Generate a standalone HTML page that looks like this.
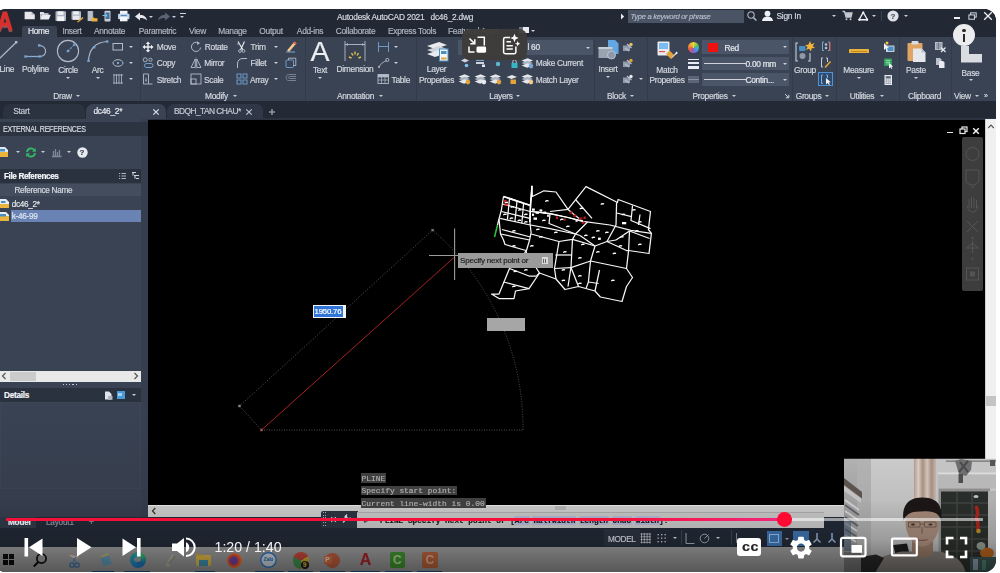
<!DOCTYPE html>
<html><head><meta charset="utf-8"><title>AutoCAD video</title>
<style>
html,body{margin:0;padding:0;background:#fff;}
body{width:1000px;height:573px;overflow:hidden;position:relative;font-family:"Liberation Sans",sans-serif;}
#v{position:absolute;left:-6px;top:8.7px;width:1001.6px;height:563.8px;border-radius:12px;overflow:hidden;background:#000;}
#c,#o{position:absolute;left:6px;top:-8.7px;width:1000px;height:573px;}
#c{filter:blur(0.5px);}
#c div,#c span,#c svg,#o div,#o span,#o svg{position:absolute;}
.t{white-space:nowrap;-webkit-text-stroke:0.18px currentColor;}
svg{overflow:visible;}
</style></head><body>
<div id="v">
<div id="c">
<div style="left:0px;top:0px;width:1000px;height:37.5px;background:#222935;"></div>
<div style="left:0px;top:37px;width:1000px;height:64.5px;background:#3a4353;"></div>
<div style="left:22px;top:26px;width:35px;height:12px;background:#3a4353;border-radius:2px 2px 0 0;"></div>
<span class="t" style="left:-2.6px;top:6px;font-size:26px;line-height:30px;letter-spacing:0px;color:#d9302d;font-weight:bold;transform:scaleX(0.84);transform-origin:0 50%;text-shadow:0 1.5px 1px rgba(240,130,140,0.55);-webkit-text-stroke:0.9px #d9302d;">A</span>
<svg style="left:0px;top:0px;" width="200" height="40" viewBox="0 0 200 40"><path d="M24.600 11.800 H31.500 L34.800 14.800 V19.300 H24.600Z" fill="#e6e8ec"/><path d="M31.500 11.800 V14.800 H34.800Z" fill="#aeb4bf"/><path d="M40 12 H43.500 L44.500 13.200 H48.500 V14.800 H40Z" fill="#dfe2e7"/><path d="M41.800 14.800 H50.800 L48.800 19.500 H40 Z" fill="#e9ebef"/><path d="M40 14 V19.500 L41.800 14.800Z" fill="#c2c7d0"/><rect x="55.500" y="11.300" width="10.500" height="9.800" rx="0.800" fill="#aeb4bf"/><rect x="57.500" y="11.300" width="6" height="3.600" fill="#eef0f3"/><rect x="57.200" y="16.300" width="7" height="4.800" fill="#f4f5f7"/><rect x="71.500" y="11.300" width="9.500" height="8.500" rx="0.800" fill="#b4bac4"/><rect x="73.300" y="11.300" width="5.500" height="3.200" fill="#eef0f3"/><rect x="73" y="15.800" width="6.500" height="4" fill="#e6e8ec"/><path d="M77 21.800 L82.500 17 L83.500 18.200 L78 22.500Z" fill="#e2a43a"/><rect x="87.600" y="11" width="5.600" height="10" fill="#a7adb8"/><path d="M89 11 V21 M91 11 V21" stroke="#dfe2e7" stroke-width="0.700"/><path d="M91.500 17.500 H94 L94.800 18.300 H97.500 V21.500 H91.500Z" fill="#e8b03c"/><rect x="104.500" y="10.800" width="6" height="10.800" rx="1" fill="#c9ced6"/><rect x="105.500" y="12.500" width="4" height="6.500" fill="#3f6f9e"/><path d="M102.500 15.500 H107 M105.500 14 L107.200 15.500 L105.500 17" stroke="#7fc0f0" stroke-width="1" fill="none"/><rect x="120" y="10.800" width="7.500" height="3.500" fill="#f1f3f6"/><rect x="118" y="13.800" width="11.500" height="5.500" rx="1" fill="#b9d3ec"/><rect x="120" y="17" width="7.500" height="4.300" fill="#f4f5f7"/><rect x="120.800" y="15" width="6" height="1" fill="#5b87b5"/></svg>
<svg style="left:134px;top:11px;" width="14" height="11" viewBox="0 0 14 11"><path d="M1 5.5 L6 1.5 V4 C10 4 12.5 6 13 9.5 C11 7.2 9 7 6 7 V9.5 Z" fill="#e6e9ee"/></svg>
<div style="left:148.5px;top:15.5px;width:0;height:0;border-left:2.0px solid transparent;border-right:2.0px solid transparent;border-top:2.0px solid #c9ced7;"></div>
<svg style="left:157px;top:11px;" width="14" height="11" viewBox="0 0 14 11"><path d="M13 5.5 L8 1.5 V4 C4 4 1.5 6 1 9.5 C3 7.2 5 7 8 7 V9.5 Z" fill="#5a6474"/></svg>
<div style="left:172.0px;top:15.5px;width:0;height:0;border-left:2.0px solid transparent;border-right:2.0px solid transparent;border-top:2.0px solid #c9ced7;"></div>
<div style="left:180px;top:13.2px;width:6px;height:1.2px;background:#d3d8df;"></div>
<div style="left:180.4px;top:15.7px;width:0;height:0;border-left:2.6px solid transparent;border-right:2.6px solid transparent;border-top:2.6px solid #c9ced7;"></div>
<span class="t" style="left:337px;top:12px;font-size:8.4px;line-height:10px;letter-spacing:-0.25px;color:#d3d8df;">Autodesk AutoCAD 2021</span>
<span class="t" style="left:430.5px;top:12px;font-size:8.4px;line-height:10px;letter-spacing:-0.25px;color:#d3d8df;">dc46_2.dwg</span>
<svg style="left:620px;top:13px;" width="5" height="7" viewBox="0 0 5 7"><path d="M1 0.5 L4.2 3.5 L1 6.5Z" fill="#e6e9ee"/></svg>
<div style="left:628px;top:10px;width:116px;height:12.5px;background:#4a5465;"></div>
<span class="t" style="left:630.5px;top:12px;font-size:7.6px;line-height:9px;letter-spacing:-0.3px;color:#b4bcc9;font-style:italic;">Type a keyword or phrase</span>
<svg style="left:746px;top:10px;" width="12" height="12" viewBox="0 0 12 12"><circle cx="5" cy="5" r="3.2" fill="none" stroke="#b3bac6" stroke-width="1.05"/><path d="M7.4 7.4 L10.4 10.6" stroke="#b3bac6" stroke-width="1.4"/></svg>
<svg style="left:761px;top:9.5px;" width="13" height="12" viewBox="0 0 13 12"><circle cx="6.5" cy="3.6" r="2.9" fill="#eef0f4"/><path d="M1 11 C1.5 7.5 4 6.6 6.5 6.6 C9 6.6 11.5 7.5 12 11Z" fill="#eef0f4"/></svg>
<span class="t" style="left:776.5px;top:11px;font-size:8.4px;line-height:10px;letter-spacing:-0.25px;color:#d3d8df;">Sign In</span>
<div style="left:832.0px;top:15.0px;width:0;height:0;border-left:2.0px solid transparent;border-right:2.0px solid transparent;border-top:2.0px solid #c9ced7;"></div>
<svg style="left:842px;top:10px;" width="11" height="11" viewBox="0 0 11 11"><path d="M0.5 1.5 H2.5 L4 7 H9 L10 3 H3" fill="none" stroke="#c3c8d0" stroke-width="1.3"/><path d="M3.5 3 H10 L9 7 H4Z" fill="#c3c8d0"/><circle cx="4.5" cy="9.3" r="1" fill="#c3c8d0"/><circle cx="8.5" cy="9.3" r="1" fill="#c3c8d0"/></svg>
<svg style="left:857.5px;top:10.5px;" width="10.5" height="10.5" viewBox="0 0 12 12"><path d="M6 1.5 L10.8 10 H1.2Z" fill="none" stroke="#eef0f4" stroke-width="1.5" stroke-linejoin="round"/><circle cx="6" cy="1.8" r="1.3" fill="#eef0f4"/><circle cx="1.6" cy="10" r="1.3" fill="#eef0f4"/><circle cx="10.4" cy="10" r="1.3" fill="#eef0f4"/></svg>
<div style="left:872.0px;top:15.0px;width:0;height:0;border-left:2.0px solid transparent;border-right:2.0px solid transparent;border-top:2.0px solid #c9ced7;"></div>
<div style="left:881px;top:11px;width:1px;height:10px;background:#3a4252;"></div>
<svg style="left:887px;top:10px;" width="12" height="12" viewBox="0 0 12 12"><circle cx="6" cy="6" r="5.6" fill="#dfe2e7"/></svg>
<span class="t" style="left:893px;top:12px;font-size:8px;line-height:9px;letter-spacing:0px;color:#4b5363;transform:translateX(-50%);font-weight:bold;">?</span>
<div style="left:903.5px;top:15.0px;width:0;height:0;border-left:2.0px solid transparent;border-right:2.0px solid transparent;border-top:2.0px solid #c9ced7;"></div>
<div style="left:953.5px;top:17.2px;width:6px;height:1.6px;background:#eef0f4;"></div>
<svg style="left:967.5px;top:11.5px;" width="9.5" height="8.6" viewBox="0 0 11 10"><rect x="3" y="1" width="6.5" height="5" fill="none" stroke="#cfd4dc" stroke-width="1.2"/><rect x="1" y="3.4" width="6.5" height="5" fill="#222935" stroke="#cfd4dc" stroke-width="1.2"/></svg>
<svg style="left:983px;top:10.5px;" width="10" height="10" viewBox="0 0 10 10"><path d="M1.2 1.2 L8.8 8.8 M8.8 1.2 L1.2 8.8" stroke="#eef0f4" stroke-width="1.3"/></svg>
<span class="t" style="left:38.5px;top:26px;font-size:8.4px;line-height:10px;letter-spacing:-0.3px;color:#e8ebf0;transform:translateX(-50%);">Home</span>
<span class="t" style="left:72px;top:26px;font-size:8.4px;line-height:10px;letter-spacing:-0.3px;color:#b0b6c1;transform:translateX(-50%);">Insert</span>
<span class="t" style="left:109.5px;top:26px;font-size:8.4px;line-height:10px;letter-spacing:-0.3px;color:#b0b6c1;transform:translateX(-50%);">Annotate</span>
<span class="t" style="left:157.5px;top:26px;font-size:8.4px;line-height:10px;letter-spacing:-0.3px;color:#b0b6c1;transform:translateX(-50%);">Parametric</span>
<span class="t" style="left:197.5px;top:26px;font-size:8.4px;line-height:10px;letter-spacing:-0.3px;color:#b0b6c1;transform:translateX(-50%);">View</span>
<span class="t" style="left:232.5px;top:26px;font-size:8.4px;line-height:10px;letter-spacing:-0.3px;color:#b0b6c1;transform:translateX(-50%);">Manage</span>
<span class="t" style="left:271px;top:26px;font-size:8.4px;line-height:10px;letter-spacing:-0.3px;color:#b0b6c1;transform:translateX(-50%);">Output</span>
<span class="t" style="left:310px;top:26px;font-size:8.4px;line-height:10px;letter-spacing:-0.3px;color:#b0b6c1;transform:translateX(-50%);">Add-ins</span>
<span class="t" style="left:355.5px;top:26px;font-size:8.4px;line-height:10px;letter-spacing:-0.3px;color:#b0b6c1;transform:translateX(-50%);">Collaborate</span>
<span class="t" style="left:412px;top:26px;font-size:8.4px;line-height:10px;letter-spacing:-0.3px;color:#b0b6c1;transform:translateX(-50%);">Express Tools</span>
<span class="t" style="left:448px;top:26px;font-size:8.4px;line-height:10px;letter-spacing:-0.3px;color:#b0b6c1;">Featured Apps</span>
<div style="left:518.5px;top:27.3px;width:10px;height:5.5px;background:#e8ebf0;"></div>
<div style="left:518.5px;top:27.3px;width:4px;height:2.3px;background:#6b7383;"></div>
<div style="left:531.0px;top:29.5px;width:0;height:0;border-left:2.0px solid transparent;border-right:2.0px solid transparent;border-top:2.0px solid #c9ced7;"></div>
<div style="left:139.5px;top:38px;width:1.3px;height:63px;background:#333b4a;"></div>
<div style="left:304.5px;top:38px;width:1.3px;height:63px;background:#333b4a;"></div>
<div style="left:416px;top:38px;width:1.3px;height:63px;background:#333b4a;"></div>
<div style="left:594px;top:38px;width:1.3px;height:63px;background:#333b4a;"></div>
<div style="left:646.5px;top:38px;width:1.3px;height:63px;background:#333b4a;"></div>
<div style="left:792px;top:38px;width:1.3px;height:63px;background:#333b4a;"></div>
<div style="left:836px;top:38px;width:1.3px;height:63px;background:#333b4a;"></div>
<div style="left:899px;top:38px;width:1.3px;height:63px;background:#333b4a;"></div>
<div style="left:950.5px;top:38px;width:1.3px;height:63px;background:#333b4a;"></div>
<span class="t" style="left:62.5px;top:91px;font-size:8.4px;line-height:10px;letter-spacing:-0.3px;color:#d3d8df;transform:translateX(-50%);">Draw</span>
<span class="t" style="left:216.5px;top:91px;font-size:8.4px;line-height:10px;letter-spacing:-0.3px;color:#d3d8df;transform:translateX(-50%);">Modify</span>
<span class="t" style="left:355.5px;top:91px;font-size:8.4px;line-height:10px;letter-spacing:-0.3px;color:#d3d8df;transform:translateX(-50%);">Annotation</span>
<span class="t" style="left:501px;top:91px;font-size:8.4px;line-height:10px;letter-spacing:-0.3px;color:#d3d8df;transform:translateX(-50%);">Layers</span>
<span class="t" style="left:616.5px;top:91px;font-size:8.4px;line-height:10px;letter-spacing:-0.3px;color:#d3d8df;transform:translateX(-50%);">Block</span>
<span class="t" style="left:710px;top:91px;font-size:8.4px;line-height:10px;letter-spacing:-0.3px;color:#d3d8df;transform:translateX(-50%);">Properties</span>
<span class="t" style="left:808.5px;top:91px;font-size:8.4px;line-height:10px;letter-spacing:-0.3px;color:#d3d8df;transform:translateX(-50%);">Groups</span>
<span class="t" style="left:862px;top:91px;font-size:8.4px;line-height:10px;letter-spacing:-0.3px;color:#d3d8df;transform:translateX(-50%);">Utilities</span>
<div style="left:76.4px;top:94.95px;width:0;height:0;border-left:2.1px solid transparent;border-right:2.1px solid transparent;border-top:2.1px solid #c9ced7;"></div>
<div style="left:233.4px;top:94.95px;width:0;height:0;border-left:2.1px solid transparent;border-right:2.1px solid transparent;border-top:2.1px solid #c9ced7;"></div>
<div style="left:379.4px;top:94.95px;width:0;height:0;border-left:2.1px solid transparent;border-right:2.1px solid transparent;border-top:2.1px solid #c9ced7;"></div>
<div style="left:515.9px;top:94.95px;width:0;height:0;border-left:2.1px solid transparent;border-right:2.1px solid transparent;border-top:2.1px solid #c9ced7;"></div>
<div style="left:629.9px;top:94.95px;width:0;height:0;border-left:2.1px solid transparent;border-right:2.1px solid transparent;border-top:2.1px solid #c9ced7;"></div>
<div style="left:731.9px;top:94.95px;width:0;height:0;border-left:2.1px solid transparent;border-right:2.1px solid transparent;border-top:2.1px solid #c9ced7;"></div>
<div style="left:825.4px;top:94.95px;width:0;height:0;border-left:2.1px solid transparent;border-right:2.1px solid transparent;border-top:2.1px solid #c9ced7;"></div>
<div style="left:880.4px;top:94.95px;width:0;height:0;border-left:2.1px solid transparent;border-right:2.1px solid transparent;border-top:2.1px solid #c9ced7;"></div>
<span class="t" style="left:924.5px;top:91px;font-size:8.4px;line-height:10px;letter-spacing:-0.3px;color:#d3d8df;transform:translateX(-50%);">Clipboard</span>
<span class="t" style="left:954px;top:91px;font-size:8.4px;line-height:10px;letter-spacing:-0.3px;color:#d3d8df;">View</span>
<div style="left:975.4px;top:94.95px;width:0;height:0;border-left:2.1px solid transparent;border-right:2.1px solid transparent;border-top:2.1px solid #c9ced7;"></div>
<span class="t" style="left:984px;top:92px;font-size:7px;line-height:7px;letter-spacing:0px;color:#d3d8df;">»</span>
<svg style="left:784px;top:93px;" width="6" height="6" viewBox="0 0 6 6"><path d="M1 1 L4.5 4.5 M4.8 1.8 V4.8 H1.8" stroke="#cfd4dc" stroke-width="1" fill="none"/></svg>
<svg style="left:-3px;top:39px;" width="22" height="22" viewBox="0 0 22 22"><path d="M1 21 L19 3.5" stroke="#b3bbc9" stroke-width="1.1"/><rect x="18" y="2" width="2.4" height="2.4" fill="#b3bbc9"/></svg>
<span class="t" style="left:6.8px;top:64px;font-size:8.4px;line-height:10px;letter-spacing:-0.3px;color:#d3d8df;transform:translateX(-50%);">Line</span>
<svg style="left:23px;top:42px;" width="26" height="18" viewBox="0 0 26 18"><path d="M2.5 14.5 H17 C24.5 14.5 24.5 4 16.5 3.5" fill="none" stroke="#b3bbc9" stroke-width="1.1"/><rect x="1.3" y="13.3" width="2.4" height="2.4" fill="#74a3d4"/><rect x="15.5" y="13.3" width="2.4" height="2.4" fill="#74a3d4"/><rect x="15" y="2.2" width="2.4" height="2.4" fill="#74a3d4"/><path d="M4 14.5 H15" stroke="#74a3d4" stroke-width="1.6" stroke-dasharray="2 1"/></svg>
<span class="t" style="left:35.5px;top:64px;font-size:8.4px;line-height:10px;letter-spacing:-0.3px;color:#d3d8df;transform:translateX(-50%);">Polyline</span>
<svg style="left:56px;top:38.5px;" width="24" height="24" viewBox="0 0 24 24"><circle cx="12" cy="12" r="10.6" fill="none" stroke="#b3bbc9" stroke-width="1.1"/><path d="M12 12 L18.5 5.5" stroke="#74a3d4" stroke-width="1.1" stroke-dasharray="2 1.2"/><rect x="10.8" y="10.8" width="2.4" height="2.4" fill="#74a3d4"/><rect x="17.3" y="4.3" width="2.4" height="2.4" fill="#74a3d4"/></svg>
<span class="t" style="left:68px;top:65px;font-size:8.4px;line-height:10px;letter-spacing:-0.3px;color:#d3d8df;transform:translateX(-50%);">Circle</span>
<div style="left:66.0px;top:76.5px;width:0;height:0;border-left:2.0px solid transparent;border-right:2.0px solid transparent;border-top:2.0px solid #c9ced7;"></div>
<svg style="left:86px;top:39px;" width="24" height="24" viewBox="0 0 24 24"><path d="M2.5 22 C3 11 9 3.5 21 2.5" fill="none" stroke="#b3bbc9" stroke-width="1.1"/><rect x="1.3" y="20.6" width="2.4" height="2.4" fill="#74a3d4"/><rect x="7" y="7" width="2.4" height="2.4" fill="#74a3d4"/><rect x="20" y="1.3" width="2.4" height="2.4" fill="#74a3d4"/></svg>
<span class="t" style="left:97.5px;top:65px;font-size:8.4px;line-height:10px;letter-spacing:-0.3px;color:#d3d8df;transform:translateX(-50%);">Arc</span>
<div style="left:95.5px;top:76.5px;width:0;height:0;border-left:2.0px solid transparent;border-right:2.0px solid transparent;border-top:2.0px solid #c9ced7;"></div>
<svg style="left:112px;top:42px;" width="12" height="10" viewBox="0 0 12 10"><rect x="1" y="1.5" width="9.5" height="6.5" fill="none" stroke="#b3bbc9" stroke-width="1"/></svg>
<svg style="left:112px;top:58px;" width="12" height="10" viewBox="0 0 12 10"><ellipse cx="6" cy="5" rx="5" ry="3.3" fill="none" stroke="#b3bbc9" stroke-width="1"/><rect x="5" y="4" width="2" height="2" fill="#74a3d4"/></svg>
<svg style="left:112px;top:73px;" width="12" height="12" viewBox="0 0 12 12"><path d="M2 1 V11 M4.5 1 V11 M7 1 V11 M9.500 1 V11 M1 2 H11 M1 10 H11" stroke="#b3bbc9" stroke-width="0.8"/></svg>
<div style="left:128.5px;top:45.8px;width:0;height:0;border-left:2.0px solid transparent;border-right:2.0px solid transparent;border-top:2.0px solid #c9ced7;"></div>
<div style="left:128.5px;top:62.0px;width:0;height:0;border-left:2.0px solid transparent;border-right:2.0px solid transparent;border-top:2.0px solid #c9ced7;"></div>
<div style="left:128.5px;top:78.0px;width:0;height:0;border-left:2.0px solid transparent;border-right:2.0px solid transparent;border-top:2.0px solid #c9ced7;"></div>
<svg style="left:142px;top:41px;" width="12" height="12" viewBox="0 0 12 12"><path d="M6 0.5 L8.2 3 H6.7 V5.3 H9 V3.800 L11.5 6 L9 8.2 V6.7 H6.7 V9 H8.2 L6 11.5 L3.800 9 H5.3 V6.7 H3 V8.2 L0.5 6 L3 3.800 V5.3 H5.3 V3 H3.800Z" fill="#eef0f4"/></svg>
<span class="t" style="left:156.8px;top:42px;font-size:8.4px;line-height:10px;letter-spacing:-0.3px;color:#d3d8df;">Move</span>
<svg style="left:142px;top:57px;" width="12" height="12" viewBox="0 0 12 12"><circle cx="3.200" cy="2.800" r="2" fill="none" stroke="#b3bbc9" stroke-width="0.9"/><circle cx="8.5" cy="2.800" r="1.6" fill="none" stroke="#b3bbc9" stroke-width="0.9"/><rect x="2.5" y="6.500" width="8.5" height="4" rx="2" fill="none" stroke="#74a3d4" stroke-width="1"/></svg>
<span class="t" style="left:156.8px;top:58px;font-size:8.4px;line-height:10px;letter-spacing:-0.3px;color:#d3d8df;">Copy</span>
<svg style="left:142px;top:73px;" width="12" height="12" viewBox="0 0 12 12"><path d="M1.5 1 H6.500 V11 H1.5Z M6.500 11 H10.5" fill="none" stroke="#b3bbc9" stroke-width="0.9"/><path d="M4 3.5 L4.800 8.5 H3.200Z" fill="#b3bbc9"/></svg>
<span class="t" style="left:156.8px;top:75px;font-size:8.4px;line-height:10px;letter-spacing:-0.3px;color:#d3d8df;">Stretch</span>
<svg style="left:190px;top:41px;" width="12" height="12" viewBox="0 0 12 12"><path d="M8.5 2 A4.6 4.6 0 1 0 10.6 6.500" fill="none" stroke="#b3bbc9" stroke-width="1"/><path d="M7 0.3 L10 2.300 L7.2 3.900Z" fill="#b3bbc9"/></svg>
<span class="t" style="left:204.8px;top:42px;font-size:8.4px;line-height:10px;letter-spacing:-0.3px;color:#d3d8df;">Rotate</span>
<svg style="left:190px;top:57px;" width="12" height="12" viewBox="0 0 12 12"><path d="M5.3 2 L1 10.5 H5.3Z M6.800 2 L11 10.5 H6.800Z" fill="none" stroke="#b3bbc9" stroke-width="0.9"/><path d="M6 0.5 V11.500" stroke="#b3bbc9" stroke-width="0.6" stroke-dasharray="1 1"/></svg>
<span class="t" style="left:204.3px;top:58px;font-size:8.4px;line-height:10px;letter-spacing:-0.3px;color:#d3d8df;">Mirror</span>
<svg style="left:190px;top:73px;" width="12" height="12" viewBox="0 0 12 12"><rect x="1" y="1" width="10" height="10" fill="none" stroke="#b3bbc9" stroke-width="0.9"/><rect x="1" y="6" width="5" height="5" fill="none" stroke="#b3bbc9" stroke-width="0.9"/></svg>
<span class="t" style="left:204px;top:75px;font-size:8.4px;line-height:10px;letter-spacing:-0.3px;color:#d3d8df;">Scale</span>
<svg style="left:236px;top:41px;" width="12" height="12" viewBox="0 0 12 12"><path d="M2 0.5 L7 9 M8.5 0.5 L4.500 9" stroke="#eef0f4" stroke-width="1.1"/><circle cx="4" cy="10" r="1.4" fill="none" stroke="#b3bbc9" stroke-width="0.9"/><circle cx="7.500" cy="10" r="1.4" fill="none" stroke="#b3bbc9" stroke-width="0.9"/><path d="M1 3 H4" stroke="#b3bbc9" stroke-width="0.9"/></svg>
<span class="t" style="left:250.5px;top:42px;font-size:8.4px;line-height:10px;letter-spacing:-0.3px;color:#d3d8df;">Trim</span>
<svg style="left:236px;top:57px;" width="12" height="12" viewBox="0 0 12 12"><path d="M1.5 11 V7 C1.500 3.500 3.500 1.500 7 1.5 H11" fill="none" stroke="#b3bbc9" stroke-width="1"/></svg>
<span class="t" style="left:250.5px;top:58px;font-size:8.4px;line-height:10px;letter-spacing:-0.3px;color:#d3d8df;">Fillet</span>
<svg style="left:236px;top:73px;" width="12" height="12" viewBox="0 0 12 12"><rect x="1" y="1" width="4" height="4" fill="none" stroke="#74a3d4" stroke-width="0.9"/><rect x="7" y="1" width="4" height="4" fill="none" stroke="#74a3d4" stroke-width="0.9"/><rect x="1" y="7" width="4" height="4" fill="none" stroke="#74a3d4" stroke-width="0.9"/><rect x="7" y="7" width="4" height="4" fill="none" stroke="#74a3d4" stroke-width="0.9"/></svg>
<span class="t" style="left:250px;top:75px;font-size:8.4px;line-height:10px;letter-spacing:-0.3px;color:#d3d8df;">Array</span>
<div style="left:274.0px;top:45.8px;width:0;height:0;border-left:2.0px solid transparent;border-right:2.0px solid transparent;border-top:2.0px solid #c9ced7;"></div>
<div style="left:274.0px;top:62.0px;width:0;height:0;border-left:2.0px solid transparent;border-right:2.0px solid transparent;border-top:2.0px solid #c9ced7;"></div>
<div style="left:274.0px;top:78.0px;width:0;height:0;border-left:2.0px solid transparent;border-right:2.0px solid transparent;border-top:2.0px solid #c9ced7;"></div>
<svg style="left:285px;top:40px;" width="13" height="13" viewBox="0 0 13 13"><path d="M2 10.500 L9.500 1.5 L11.500 3.200 L4 12Z" fill="#f2c98c"/><path d="M9.500 1.5 L11.500 3.200 L10.3 4.600 L8.300 2.900Z" fill="#e2574c"/><path d="M1 12 H10" stroke="#7aa6d6" stroke-width="1"/></svg>
<svg style="left:285px;top:57px;" width="12" height="12" viewBox="0 0 12 12"><rect x="1" y="3" width="7.500" height="7.500" rx="1" fill="none" stroke="#74a3d4" stroke-width="0.9"/><path d="M3.500 3 V1.200 H10.800 V8.500 H8.500" fill="none" stroke="#b3bbc9" stroke-width="0.9"/></svg>
<svg style="left:285px;top:73px;" width="12" height="12" viewBox="0 0 12 12"><path d="M11 1.5 H3.500 C0.5 1.5 0.5 7.500 3.500 7.500 H11 M11 3.500 H4.500 C3 3.500 3 5.500 4.500 5.500 H11" fill="none" stroke="#7f8897" stroke-width="0.9"/></svg>
<span class="t" style="left:320px;top:35px;font-size:28.5px;line-height:32px;letter-spacing:0px;color:#eceef2;transform:translateX(-50%);">A</span>
<span class="t" style="left:320px;top:65px;font-size:8.4px;line-height:10px;letter-spacing:-0.3px;color:#d3d8df;transform:translateX(-50%);">Text</span>
<div style="left:318.0px;top:76.5px;width:0;height:0;border-left:2.0px solid transparent;border-right:2.0px solid transparent;border-top:2.0px solid #c9ced7;"></div>
<svg style="left:343px;top:40px;" width="24" height="22" viewBox="0 0 24 22"><path d="M2 1 V21 M22 1 V21 M2 4.500 H22" stroke="#b3bbc9" stroke-width="0.9" fill="none"/><path d="M2 4.500 L5 3.300 V5.700Z M22 4.500 L19 3.300 V5.700Z" fill="#b3bbc9"/><path d="M8.500 13 L10 15.500 M12 11.500 V14.500 M15.500 13 L14 15.500 M6 17 L8.500 18 M18 17 L15.500 18" stroke="#e8c14a" stroke-width="1.4"/></svg>
<span class="t" style="left:355px;top:64px;font-size:8.4px;line-height:10px;letter-spacing:-0.3px;color:#d3d8df;transform:translateX(-50%);">Dimension</span>
<svg style="left:377px;top:41px;" width="13" height="12" viewBox="0 0 13 12"><path d="M1.500 1 V11 M11.500 1 V11 M1.500 5.500 H11.500" stroke="#74a3d4" stroke-width="0.9"/></svg>
<svg style="left:377px;top:57px;" width="13" height="12" viewBox="0 0 13 12"><path d="M2 10 C4 6 6 5.500 9.500 3.500" fill="none" stroke="#b3bbc9" stroke-width="0.9"/><circle cx="10.300" cy="3" r="1.600" fill="none" stroke="#b3bbc9" stroke-width="0.9"/><circle cx="2" cy="10" r="1" fill="#b3bbc9"/></svg>
<svg style="left:377px;top:73px;" width="13" height="12" viewBox="0 0 13 12"><rect x="1" y="1.500" width="10.500" height="9" fill="none" stroke="#b3bbc9" stroke-width="0.9"/><path d="M1 4 H11.500 M4.500 4 V10.500 M8 4 V10.500 M1 7 H11.500" stroke="#b3bbc9" stroke-width="0.7"/><rect x="1" y="1.500" width="10.500" height="2.500" fill="#b3bbc9"/></svg>
<span class="t" style="left:391.5px;top:75px;font-size:8.4px;line-height:10px;letter-spacing:-0.3px;color:#d3d8df;">Table</span>
<div style="left:393.5px;top:45.8px;width:0;height:0;border-left:2.0px solid transparent;border-right:2.0px solid transparent;border-top:2.0px solid #c9ced7;"></div>
<div style="left:393.5px;top:62.0px;width:0;height:0;border-left:2.0px solid transparent;border-right:2.0px solid transparent;border-top:2.0px solid #c9ced7;"></div>
<svg style="left:424px;top:39px;" width="26" height="24" viewBox="0 0 26 24"><path d="M3 7 L15 3 L23 6 L11 10Z" fill="#e9ebef"/><path d="M3 11 L15 7 L23 10 L11 14Z" fill="#cfd3da"/><path d="M3 15 L15 11 L23 14 L11 18Z" fill="#e9ebef"/><rect x="15.500" y="10" width="8.500" height="12" fill="#f4f5f7" stroke="#4a8fc4" stroke-width="1"/><rect x="17" y="12" width="5.500" height="3" fill="#4a8fc4"/><rect x="17" y="18.500" width="5.500" height="2" fill="#e2a43a"/></svg>
<span class="t" style="left:436.5px;top:64px;font-size:8.4px;line-height:10px;letter-spacing:-0.3px;color:#d3d8df;transform:translateX(-50%);">Layer</span>
<span class="t" style="left:436.5px;top:75px;font-size:8.4px;line-height:10px;letter-spacing:-0.3px;color:#d3d8df;transform:translateX(-50%);">Properties</span>
<div style="left:458px;top:40px;width:134.5px;height:14.5px;background:#4b5568;"></div>
<span class="t" style="left:527.5px;top:42px;font-size:8.4px;line-height:10px;letter-spacing:-0.3px;color:#e0e4ea;">l 60</span>
<div style="left:586px;top:46.5px;width:0;height:0;border-left:2px solid transparent;border-right:2px solid transparent;border-top:2px solid #c9ced7;"></div>
<svg style="left:460px;top:57px;" width="10" height="12" viewBox="0 0 10 12"><path d="M1 3.500 L5 1.500 L9 3.500 L5 5.500Z" fill="#cfd4dc"/><circle cx="6.500" cy="8.500" r="1.800" fill="#7fc4e8"/></svg>
<svg style="left:475px;top:57px;" width="12" height="12" viewBox="0 0 12 12"><rect x="1" y="2" width="8" height="2" fill="#7aa6d6"/><rect x="1" y="5" width="8" height="2" fill="#cfd4dc"/><rect x="7" y="7.500" width="3" height="2.500" fill="#e4e7ec"/></svg>
<svg style="left:494px;top:60px;" width="8" height="8" viewBox="0 0 8 8"><circle cx="4" cy="4" r="2.200" fill="#5fb8c9"/></svg>
<svg style="left:510px;top:59px;" width="9" height="10" viewBox="0 0 9 10"><rect x="1.500" y="4" width="6" height="5" fill="#36b5c4"/><path d="M2.800 4 V2.500 A1.700 1.700 0 0 1 6.200 2.500 V4" fill="none" stroke="#cfd4dc" stroke-width="0.9"/></svg>
<svg style="left:520.5px;top:57px;" width="13.2" height="12" viewBox="0 0 11 10"><path d="M0.500 3 L5.500 1 L10 3 L5 5Z" fill="#e4e7ec"/><path d="M0.500 5 L5.500 3.200 L10 5 L5 7Z" fill="#aab2bf"/><path d="M0.500 7 L5.500 5.200 L10 7 L5 9Z" fill="#e4e7ec"/><circle cx="8.300" cy="7.600" r="1.900" fill="#7aa6d6"/></svg>
<span class="t" style="left:535.8px;top:58px;font-size:8.4px;line-height:10px;letter-spacing:-0.3px;color:#d3d8df;">Make Current</span>
<svg style="left:458px;top:73px;" width="13.2" height="12" viewBox="0 0 11 10"><path d="M0.500 3 L5.500 1 L10 3 L5 5Z" fill="#e4e7ec"/><path d="M0.500 5 L5.500 3.200 L10 5 L5 7Z" fill="#aab2bf"/><path d="M0.500 7 L5.500 5.200 L10 7 L5 9Z" fill="#e4e7ec"/><circle cx="8.300" cy="7.600" r="1.900" fill="#e2a43a"/></svg>
<svg style="left:473.5px;top:73px;" width="13.2" height="12" viewBox="0 0 11 10"><path d="M0.500 3 L5.500 1 L10 3 L5 5Z" fill="#e4e7ec"/><path d="M0.500 5 L5.500 3.200 L10 5 L5 7Z" fill="#aab2bf"/><path d="M0.500 7 L5.500 5.200 L10 7 L5 9Z" fill="#e4e7ec"/><circle cx="8.300" cy="7.600" r="1.900" fill="#e8eaee"/></svg>
<svg style="left:489px;top:73px;" width="13.2" height="12" viewBox="0 0 11 10"><path d="M0.500 3 L5.500 1 L10 3 L5 5Z" fill="#e4e7ec"/><path d="M0.500 5 L5.500 3.200 L10 5 L5 7Z" fill="#aab2bf"/><path d="M0.500 7 L5.500 5.200 L10 7 L5 9Z" fill="#e4e7ec"/><circle cx="8.300" cy="7.600" r="1.900" fill="#e2a43a"/></svg>
<svg style="left:506px;top:74px;" width="12" height="11" viewBox="0 0 12 11"><path d="M0.500 3 L6 1 L11 3 L5.500 5Z" fill="#e4e7ec"/><rect x="4.500" y="5.500" width="5.500" height="4.500" fill="#e2a43a"/></svg>
<svg style="left:520.5px;top:73px;" width="13.2" height="12" viewBox="0 0 11 10"><path d="M0.500 3 L5.500 1 L10 3 L5 5Z" fill="#e4e7ec"/><path d="M0.500 5 L5.500 3.200 L10 5 L5 7Z" fill="#aab2bf"/><path d="M0.500 7 L5.500 5.200 L10 7 L5 9Z" fill="#e4e7ec"/><circle cx="8.300" cy="7.600" r="1.900" fill="#f2c98c"/></svg>
<span class="t" style="left:535.8px;top:75px;font-size:8.4px;line-height:10px;letter-spacing:-0.3px;color:#d3d8df;">Match Layer</span>
<svg style="left:597px;top:39px;" width="23" height="22" viewBox="0 0 23 22"><path d="M11 1 H18 L21.500 4.500 V15 H11Z" fill="#62a7e3"/><rect x="1.500" y="8" width="14" height="11" fill="#9aa3b2"/><rect x="1.500" y="8" width="14" height="2" fill="#c9ced6"/><circle cx="14.500" cy="16" r="4" fill="#8f98a7" stroke="#c9ced6" stroke-width="0.8"/></svg>
<span class="t" style="left:608px;top:64px;font-size:8.4px;line-height:10px;letter-spacing:-0.3px;color:#d3d8df;transform:translateX(-50%);">Insert</span>
<div style="left:606.0px;top:76.0px;width:0;height:0;border-left:2.0px solid transparent;border-right:2.0px solid transparent;border-top:2.0px solid #c9ced7;"></div>
<svg style="left:622px;top:42px;" width="12" height="11" viewBox="0 0 12 11"><rect x="1" y="3.500" width="7" height="5.500" fill="#8f9aab"/><path d="M5 2 L9.500 6 M3 6 L7 9" stroke="#b9c0cb" stroke-width="1.2"/><circle cx="9" cy="2.500" r="1.700" fill="#e2c06a"/></svg>
<svg style="left:622px;top:58px;" width="12" height="11" viewBox="0 0 12 11"><rect x="1" y="3.500" width="7" height="5.500" fill="#8f9aab"/><path d="M5 2 L9.500 6 M3 6 L7 9" stroke="#b9c0cb" stroke-width="1.2"/><circle cx="9" cy="2.500" r="1.700" fill="#e2a43a"/></svg>
<svg style="left:622px;top:73.5px;" width="12" height="11" viewBox="0 0 12 11"><rect x="1" y="3.500" width="7" height="5.500" fill="#8f9aab"/><path d="M5 2 L9.500 6 M3 6 L7 9" stroke="#b9c0cb" stroke-width="1.2"/><circle cx="9" cy="2.500" r="1.700" fill="#e8eaee"/></svg>
<div style="left:638.5px;top:78.0px;width:0;height:0;border-left:2.0px solid transparent;border-right:2.0px solid transparent;border-top:2.0px solid #c9ced7;"></div>
<svg style="left:656px;top:40px;" width="24" height="24" viewBox="0 0 24 24"><rect x="1.500" y="1.500" width="12" height="14" rx="1" fill="#e8ebf0"/><rect x="3" y="3" width="9" height="6" fill="#7bbcf0"/><rect x="3" y="11" width="6" height="1.200" fill="#e2574c"/><path d="M10 14 L15 19 L18.500 15.500 L13.500 10.500Z" fill="#e2a43a"/><path d="M15 19 L18.500 15.500 L22 13 L20.500 11.500Z" fill="#f1f3f6"/></svg>
<span class="t" style="left:667px;top:65px;font-size:8.4px;line-height:10px;letter-spacing:-0.3px;color:#d3d8df;transform:translateX(-50%);">Match</span>
<span class="t" style="left:667px;top:75px;font-size:8.4px;line-height:10px;letter-spacing:-0.3px;color:#d3d8df;transform:translateX(-50%);">Properties</span>
<div style="left:687.500px;top:42px;width:11px;height:11px;border-radius:50%;background:conic-gradient(#f2d33c,#59c356,#3aa0e8,#8a5fd6,#e8534a,#f09a3a,#f2d33c);"></div>
<div style="left:688px;top:58.5px;width:10.5px;height:1.8px;background:#e8ebf0;"></div>
<div style="left:688px;top:62px;width:10.5px;height:2.2px;background:#e8ebf0;"></div>
<div style="left:688px;top:66px;width:10.5px;height:2.6px;background:#e8ebf0;"></div>
<div style="left:688px;top:75.5px;width:10.5px;height:7px;background:#5b6576;"></div>
<div style="left:688px;top:78.5px;width:10.5px;height:1px;background:#8a93a3;"></div>
<div style="left:701.5px;top:40px;width:87.5px;height:13.8px;background:#4b5568;"></div>
<div style="left:701.5px;top:56.5px;width:87.5px;height:13.8px;background:#4b5568;"></div>
<div style="left:701.5px;top:72.5px;width:87.5px;height:13.8px;background:#4b5568;"></div>
<div style="left:707.5px;top:42.5px;width:10.5px;height:9.5px;background:#f01010;"></div>
<span class="t" style="left:724.5px;top:43px;font-size:8.4px;line-height:10px;letter-spacing:-0.3px;color:#e6e9ee;">Red</span>
<div style="left:704px;top:63px;width:42px;height:1px;background:#cfd4dc;"></div>
<span class="t" style="left:745.5px;top:59px;font-size:8.4px;line-height:10px;letter-spacing:-0.3px;color:#e6e9ee;">0.00 mm</span>
<div style="left:704px;top:79px;width:42px;height:1px;background:#cfd4dc;"></div>
<span class="t" style="left:745.5px;top:75px;font-size:8.4px;line-height:10px;letter-spacing:-0.3px;color:#e6e9ee;">Contin...</span>
<div style="left:782.5px;top:46.0px;width:0;height:0;border-left:2px solid transparent;border-right:2px solid transparent;border-top:2px solid #c9ced7;"></div>
<div style="left:782.5px;top:62.5px;width:0;height:0;border-left:2px solid transparent;border-right:2px solid transparent;border-top:2px solid #c9ced7;"></div>
<div style="left:782.5px;top:78.5px;width:0;height:0;border-left:2px solid transparent;border-right:2px solid transparent;border-top:2px solid #c9ced7;"></div>
<svg style="left:795px;top:41px;" width="20" height="22" viewBox="0 0 20 22"><path d="M3 2 H1 V20 H3 M13 20 H15 V12" fill="none" stroke="#c7ced9" stroke-width="1.100"/><rect x="4" y="5" width="6.500" height="5" rx="1" fill="#4a8fc4"/><circle cx="7.500" cy="15" r="3" fill="#8f98a7"/><path d="M15 0 L16.200 3.300 L19.500 2 L17.700 5 L20 7 L16.700 7.200 L16 10.500 L14 7.800 L11 9 L12.500 6 L10 4 L13.300 3.800Z" fill="#f2b53a"/></svg>
<span class="t" style="left:805px;top:65px;font-size:8.4px;line-height:10px;letter-spacing:-0.3px;color:#d3d8df;transform:translateX(-50%);">Group</span>
<svg style="left:821px;top:41px;" width="11" height="11" viewBox="0 0 11 11"><path d="M3 1 H1.500 V9.500 H3 M7 1 H8.500 V9.500 H7" fill="none" stroke="#7aa6d6" stroke-width="1"/><path d="M9 1 V10" stroke="#e2574c" stroke-width="1"/><circle cx="5" cy="3.500" r="1.300" fill="#b9c0cb"/><circle cx="5" cy="7" r="1.300" fill="#b9c0cb"/></svg>
<svg style="left:820px;top:57px;" width="12" height="12" viewBox="0 0 12 12"><path d="M3 1 H1.500 V10 H3 M6 1 H7.500 V5" fill="none" stroke="#c7ced9" stroke-width="1"/><path d="M5 10.500 L10.500 4.500" stroke="#e2a43a" stroke-width="1.600"/></svg>
<div style="left:818px;top:72px;width:15px;height:14px;background:#2f4a6b;box-shadow:inset 0 0 0 1px #4f93d6;"></div>
<svg style="left:820px;top:74px;" width="12" height="11" viewBox="0 0 12 11"><path d="M3 1 H1.500 V9.500 H3 M6 1 H7.500 V4" fill="none" stroke="#7fb0e0" stroke-width="1"/><path d="M6 4 V10.500 L7.700 9 L9 11 L9.900 10.500 L8.700 8.500 L10.800 8.300Z" fill="#f4f5f7"/></svg>
<div style="left:849px;top:48.5px;width:19.5px;height:4.6px;background:#e9b33c;border-radius:0.5px;"></div>
<div style="left:850.5px;top:50.5px;width:16.5px;height:0.9px;background:#c28a1c;"></div>
<span class="t" style="left:858.5px;top:65px;font-size:8.4px;line-height:10px;letter-spacing:-0.3px;color:#d3d8df;transform:translateX(-50%);">Measure</span>
<div style="left:856.5px;top:76.5px;width:0;height:0;border-left:2.0px solid transparent;border-right:2.0px solid transparent;border-top:2.0px solid #c9ced7;"></div>
<svg style="left:882px;top:41px;" width="13" height="12" viewBox="0 0 13 12"><rect x="4.500" y="5" width="7.500" height="5.500" fill="#4a8fc4" stroke="#e8ebf0" stroke-width="0.8"/><path d="M2 2 V9 L3.800 7.500 L5 10 L6 9.500 L4.800 7.200 L7 7Z" fill="#f4f5f7"/><circle cx="5" cy="2" r="1.500" fill="#f2c53a"/></svg>
<svg style="left:882px;top:57px;" width="13" height="12" viewBox="0 0 13 12"><rect x="2" y="1.500" width="8" height="7.500" fill="#2f9e5b"/><path d="M3.500 3.500 H8.500 M3.500 5.500 H8.500 M5 2.500 V8 M7 2.500 V8" stroke="#9fe0b8" stroke-width="0.600"/><path d="M7 6 V11.500 L8.500 10.300 L9.500 12 L10.300 11.500 L9.400 9.800 L11.200 9.600Z" fill="#f4f5f7"/></svg>
<svg style="left:883px;top:73.5px;" width="11" height="12" viewBox="0 0 11 12"><rect x="1.500" y="1" width="7.500" height="10" fill="#e8ebf0"/><rect x="2.700" y="2.200" width="5.100" height="2.300" fill="#5b6576"/><path d="M2.700 6 H7.800 M2.700 7.800 H7.800 M2.700 9.500 H7.800" stroke="#5b6576" stroke-width="0.900" stroke-dasharray="1.100 0.800"/></svg>
<svg style="left:906px;top:40px;" width="22" height="23" viewBox="0 0 22 23"><rect x="1.500" y="3" width="15" height="18" rx="1" fill="#e0a562"/><rect x="5.500" y="1" width="7" height="3.500" rx="1" fill="#d8dce3"/><path d="M7 8.500 H15.500 L19.500 12.500 V22 H7Z" fill="#e4e7ec"/><path d="M15.500 8.500 V12.500 H19.500Z" fill="#b9c0cb"/></svg>
<span class="t" style="left:916px;top:65px;font-size:8.4px;line-height:10px;letter-spacing:-0.3px;color:#d3d8df;transform:translateX(-50%);">Paste</span>
<div style="left:914.0px;top:77.0px;width:0;height:0;border-left:2.0px solid transparent;border-right:2.0px solid transparent;border-top:2.0px solid #c9ced7;"></div>
<svg style="left:934px;top:41px;" width="13" height="12" viewBox="0 0 13 12"><rect x="1" y="1" width="7.500" height="8" fill="#b9c0cb"/><path d="M2 3 H7.500 M2 5 H7.500 M2 7 H7.500 M4.500 1.500 V8.500" stroke="#5b6576" stroke-width="0.700"/><path d="M7 6.500 L11.500 11 M11.500 6.500 L7 11" stroke="#e8ebf0" stroke-width="1.200"/></svg>
<svg style="left:935px;top:57px;" width="11" height="12" viewBox="0 0 11 12"><path d="M1 1 H5 L6.500 2.500 V8 H1Z" fill="#b9c0cb"/><path d="M4 4 H8 L9.500 5.500 V11 H4Z" fill="#e8ebf0"/></svg>
<svg style="left:960px;top:46px;" width="23" height="17" viewBox="0 0 23 17"><path d="M1 0 H9 V8 H22 V16.500 H1Z" fill="#d9dce1"/></svg>
<span class="t" style="left:970.5px;top:68px;font-size:8.4px;line-height:10px;letter-spacing:-0.3px;color:#d3d8df;transform:translateX(-50%);">Base</span>
<div style="left:968.5px;top:79.0px;width:0;height:0;border-left:2.0px solid transparent;border-right:2.0px solid transparent;border-top:2.0px solid #c9ced7;"></div>
<div style="left:0px;top:100.5px;width:1000px;height:20px;background:#232a36;"></div>
<div style="left:0px;top:118px;width:1000px;height:2.2px;background:#2b3340;"></div>
<div style="left:3px;top:103.5px;width:82px;height:15.5px;background:#2b3341;border-radius:7px 7px 0 0;"></div>
<span class="t" style="left:13.3px;top:106px;font-size:8.4px;line-height:10px;letter-spacing:-0.3px;color:#c5cad3;">Start</span>
<div style="left:86px;top:103.5px;width:80px;height:15.5px;background:#3a4353;border-radius:7px 7px 0 0;"></div>
<span class="t" style="left:93.5px;top:106px;font-size:8.4px;line-height:10px;letter-spacing:-0.3px;color:#e8ebf0;">dc46_2*</span>
<svg style="left:152px;top:108px;" width="8" height="8" viewBox="0 0 8 8"><path d="M1.300 1.300 L6.700 6.700 M6.700 1.300 L1.300 6.700" stroke="#dfe3ea" stroke-width="1.150"/></svg>
<div style="left:167px;top:103.5px;width:96px;height:15.5px;background:#303746;border-radius:7px 7px 0 0;"></div>
<span class="t" style="left:174px;top:106px;font-size:8.4px;line-height:10px;letter-spacing:-0.55px;color:#c5cad3;">BDQH_TAN CHAU*</span>
<svg style="left:244.5px;top:108px;" width="8" height="8" viewBox="0 0 8 8"><path d="M1.300 1.300 L6.700 6.700 M6.700 1.300 L1.300 6.700" stroke="#c3c8d1" stroke-width="1.150"/></svg>
<svg style="left:267.5px;top:108px;" width="8" height="8" viewBox="0 0 8 8"><path d="M4 1 V7 M1 4 H7" stroke="#8d95a3" stroke-width="1.500"/></svg>
<div style="left:0px;top:119px;width:148px;height:397.5px;background:#3a4353;"></div>
<div style="left:141px;top:119px;width:7px;height:397.5px;background:#363e4d;"></div>
<div style="left:0px;top:121.5px;width:148px;height:14.5px;background:#2c3441;"></div>
<span class="t" style="left:2.8px;top:124px;font-size:8.4px;line-height:10px;letter-spacing:-0.3px;color:#d9dde4;transform:scaleX(0.845);transform-origin:0 50%;">EXTERNAL REFERENCES</span>
<svg style="left:-2px;top:146px;" width="11" height="12" viewBox="0 0 11 12"><path d="M1 1 H7 L10 4 V11 H1Z" fill="#dfe6f0"/><path d="M1 6 H10 V11 H1Z" fill="#e9b33c"/><rect x="2" y="3" width="5" height="2.500" fill="#4a8fc4"/></svg>
<div style="left:15.5px;top:151.3px;width:0;height:0;border-left:2.0px solid transparent;border-right:2.0px solid transparent;border-top:2.0px solid #c9ced7;"></div>
<svg style="left:24.5px;top:146.5px;" width="12" height="11" viewBox="0 0 12 11"><path d="M2 5 A4 4 0 0 1 9.500 3.500 M10 6 A4 4 0 0 1 2.500 7.500" fill="none" stroke="#35b565" stroke-width="1.900"/><path d="M10.800 1 V4.800 H7Z M1.200 10 V6.200 H5Z" fill="#35b565"/></svg>
<div style="left:41.0px;top:151.3px;width:0;height:0;border-left:2.0px solid transparent;border-right:2.0px solid transparent;border-top:2.0px solid #c9ced7;"></div>
<svg style="left:50.5px;top:147px;" width="11" height="10" viewBox="0 0 11 10"><path d="M1 9.500 H10.500 M2.500 9 V4 M4.500 9 V2 M6.500 9 V5 M8.500 9 V3" stroke="#7f8897" stroke-width="1.300"/></svg>
<div style="left:66.5px;top:151.3px;width:0;height:0;border-left:2.0px solid transparent;border-right:2.0px solid transparent;border-top:2.0px solid #c9ced7;"></div>
<svg style="left:76.5px;top:146.5px;" width="11" height="11" viewBox="0 0 11 11"><circle cx="5.500" cy="5.500" r="5.200" fill="#e8ebf0"/></svg>
<span class="t" style="left:82px;top:148px;font-size:8px;line-height:9px;letter-spacing:0px;color:#3a4353;transform:translateX(-50%);font-weight:bold;">?</span>
<div style="left:0px;top:168.5px;width:141px;height:14px;background:#2a323f;"></div>
<span class="t" style="left:4px;top:172px;font-size:8.2px;line-height:9px;letter-spacing:-0.4px;color:#f4f6f9;font-weight:bold;">File References</span>
<svg style="left:118px;top:171.5px;" width="9" height="8" viewBox="0 0 9 8"><path d="M1 1.500 H2.200 M3.500 1.500 H8 M1 4 H2.200 M3.500 4 H8 M1 6.500 H2.200 M3.500 6.500 H8" stroke="#aeb5c1" stroke-width="1"/></svg>
<svg style="left:130.5px;top:171px;" width="9" height="9" viewBox="0 0 9 9"><path d="M1 1.500 H5 M3 4.500 H8 M5 7.500 H8 M2 1.500 V4.500 M4 4.500 V7.500" stroke="#cfd4dc" stroke-width="1.100"/></svg>
<div style="left:0px;top:183.5px;width:141px;height:12.5px;background:#444d5e;"></div>
<span class="t" style="left:14.5px;top:186px;font-size:8.2px;line-height:9px;letter-spacing:-0.3px;color:#d8dce3;">Reference Name</span>
<svg style="left:-1.5px;top:197.5px;" width="11" height="11" viewBox="0 0 11 11"><path d="M1 1 H7 L10 4 V10 H1Z" fill="#e8edf4"/><path d="M1 6 H10 V10 H1Z" fill="#e9b33c"/><rect x="2" y="3" width="4.500" height="2" fill="#4a8fc4"/></svg>
<span class="t" style="left:11.8px;top:200px;font-size:8.2px;line-height:9px;letter-spacing:-0.3px;color:#e1e5ea;">dc46_2*</span>
<div style="left:10.5px;top:209.5px;width:130.5px;height:12.3px;background:#6983b4;"></div>
<svg style="left:-1.5px;top:210.5px;" width="11" height="11" viewBox="0 0 11 11"><path d="M1 1 H7 L10 4 V10 H1Z" fill="#e8edf4"/><path d="M1 5 H10 V10 H1Z" fill="#e9b33c"/><rect x="1" y="3" width="6" height="2.500" fill="#4a8fc4"/></svg>
<span class="t" style="left:11.8px;top:212px;font-size:8.2px;line-height:9px;letter-spacing:-0.3px;color:#dfe6f2;">k-46-99</span>
<div style="left:0px;top:370.5px;width:141px;height:11.5px;background:#e9e9e9;"></div>
<div style="left:9.5px;top:372px;width:26px;height:8.5px;background:#cbcbcb;"></div>
<svg style="left:1px;top:372px;" width="6" height="8" viewBox="0 0 6 8"><path d="M4.500 1 L1.500 4 L4.500 7" fill="none" stroke="#555" stroke-width="1.200"/></svg>
<svg style="left:133px;top:372px;" width="6" height="8" viewBox="0 0 6 8"><path d="M1.500 1 L4.500 4 L1.500 7" fill="none" stroke="#555" stroke-width="1.200"/></svg>
<div style="left:62.5px;top:384px;width:1.3px;height:1.3px;background:#c5cad3;"></div>
<div style="left:65.8px;top:384px;width:1.3px;height:1.3px;background:#c5cad3;"></div>
<div style="left:69.1px;top:384px;width:1.3px;height:1.3px;background:#c5cad3;"></div>
<div style="left:72.4px;top:384px;width:1.3px;height:1.3px;background:#c5cad3;"></div>
<div style="left:75.7px;top:384px;width:1.3px;height:1.3px;background:#c5cad3;"></div>
<div style="left:0px;top:388px;width:141px;height:14px;background:#2a323f;"></div>
<span class="t" style="left:4px;top:391px;font-size:8.2px;line-height:9px;letter-spacing:-0.25px;color:#f4f6f9;font-weight:bold;">Details</span>
<svg style="left:104px;top:390.5px;" width="9" height="9" viewBox="0 0 9 9"><path d="M1 0.500 H5 L7.500 3 V8.500 H1Z" fill="#dfe3ea"/><path d="M4 5 H8.500 V8.800 H4Z" fill="#aeb5c1"/></svg>
<div style="left:116.5px;top:391px;width:8.5px;height:8px;background:#4a9ad8;"></div>
<div style="left:118px;top:392.5px;width:3.5px;height:3px;background:#9fd0f4;"></div>
<div style="left:132.20000000000002px;top:393.95px;width:0;height:0;border-left:2.1px solid transparent;border-right:2.1px solid transparent;border-top:2.1px solid #c9ced7;"></div>
<div style="left:0px;top:402px;width:141px;height:86.5px;background:#394252;box-shadow:inset 0 0 0 1px #434c5c;"></div>
<div style="left:0;top:402px;width:148px;height:115px;background:linear-gradient(#3a4353,#323a48);opacity:.6"></div>
<div style="left:148px;top:120.2px;width:837px;height:385.3px;background:#000;"></div>
<svg style="left:0px;top:0px;" width="1000" height="573" viewBox="0 0 1000 573"><g fill="none" stroke="#636363" stroke-width="0.9" stroke-dasharray="0.9 1.6"><path d="M239.500 406 L432.600 230.100"/><path d="M239.500 406 L261.500 430"/><path d="M261.500 430 H523"/><path d="M432.600 230.100 A262 262 0 0 1 523 430"/></g><path d="M261.500 430 L454.600 257" stroke="#a82222" stroke-width="1"/><rect x="238.300" y="404.800" width="2.400" height="2.400" fill="#888"/><rect x="260.300" y="428.800" width="2.400" height="2.400" fill="#a55"/><rect x="431.400" y="228.900" width="2.400" height="2.400" fill="#777"/><path d="M454.600 228.500 V280 M429 255.500 H459.500" stroke="#9c9c9c" stroke-width="1.100"/><g fill="none" stroke="#f6f6f6" stroke-width="1.25" stroke-linejoin="round"><polyline points="503.5,196.5 530.5,205.5 532.0,186.0 532.3,196.5 544.0,190.8 556.0,192.0 568.0,209.4 586.0,186.6 617.5,202.5 618.1,199.5 650.5,211.5 648.4,229.5 651.4,233.4 649.0,253.5 628.6,250.5 626.5,268.5 632.5,277.5 626.5,286.5 622.0,301.5 600.4,297.0 595.0,291.0 578.5,286.5 565.0,289.5 556.0,279.0 539.5,273.0 529.0,288.6 515.5,291.0 514.0,298.5 499.0,298.5 491.5,294.0 499.0,294.0 509.5,268.5 524.5,253.5"/><polyline points="503.5,196.5 501.4,210.0 499.0,219.0 497.5,225.0"/><polyline points="499.0,219.0 500.5,234.0 503.5,240.0 505.0,244.5 526.0,250.5 524.5,253.5"/><polyline points="530.5,205.5 529.9,222.0 531.1,232.5 529.6,240.0 526.0,252.0"/><polyline points="502.6,204.0 530.2,211.5"/><polyline points="501.4,211.5 529.9,218.4"/><polyline points="500.2,218.4 530.2,225.0"/><polyline points="502.0,229.5 530.5,237.0"/><polyline points="509.5,198.6 507.4,219.6"/><polyline points="517.0,201.0 514.9,222.0"/><polyline points="523.6,203.4 521.8,223.5"/><polyline points="531.1,211.5 550.0,213.6 568.0,217.5 583.0,221.4 610.0,225.0 631.0,230.4 651.4,233.4"/><polyline points="568.0,209.4 574.0,214.5 583.0,221.4"/><polyline points="530.5,225.0 550.0,228.6 575.5,234.0 580.0,235.5"/><polyline points="550.0,213.6 549.1,223.5 575.5,234.0"/><polyline points="531.1,234.0 559.0,241.5 572.5,239.4 575.5,234.0 587.5,222.0"/><polyline points="559.0,241.5 554.5,268.5 556.0,279.0"/><polyline points="572.5,239.4 571.0,267.0 568.0,286.5"/><polyline points="555.4,255.0 571.6,255.0"/><polyline points="554.5,268.5 571.0,267.6"/><polyline points="572.5,239.4 595.0,246.0 607.0,241.5 626.5,250.5 628.6,250.5"/><polyline points="595.0,246.0 590.5,261.0 571.0,267.6"/><polyline points="590.5,261.0 626.5,268.5"/><polyline points="590.5,261.0 588.4,282.0 586.0,288.6"/><polyline points="607.0,241.5 616.0,225.0"/><polyline points="616.0,225.0 616.6,202.5"/><polyline points="629.5,231.0 628.6,250.5"/><polyline points="629.5,231.0 649.6,238.5"/><polyline points="616.0,240.0 629.5,231.0"/><polyline points="607.0,241.5 616.0,240.0"/><polyline points="632.5,205.5 631.0,220.5 650.5,228.6"/><polyline points="616.6,213.0 631.6,216.6"/><polyline points="638.5,225.0 640.0,214.5"/><polyline points="580.0,235.5 595.0,246.0"/><polyline points="599.5,270.0 595.0,291.0"/><polyline points="588.4,282.0 598.6,283.5"/><polyline points="509.5,268.5 529.0,276.0 536.5,276.0"/><polyline points="503.5,282.0 529.0,288.6"/><polyline points="575.5,199.5 592.0,218.4"/><polyline points="568.0,209.4 550.0,211.5"/><polyline points="500.5,234.0 529.6,240.0"/><polyline points="571.0,267.6 578.5,286.5"/><polyline points="526.0,252.0 539.5,273.0"/><polyline points="536.5,276.0 539.5,273.0"/></g><path d="M545.2 201.5 l1.400 -0.900 l2 0.200" stroke="#fff" stroke-width="1.300" fill="none"/><path d="M579.7 209.0 l1.400 -0.900 l2 0.200" stroke="#fff" stroke-width="1.300" fill="none"/><path d="M600.7 204.5 l1.400 -0.900 l2 0.200" stroke="#fff" stroke-width="1.300" fill="none"/><path d="M632.2 210.5 l1.400 -0.900 l2 0.200" stroke="#fff" stroke-width="1.300" fill="none"/><path d="M621.7 215.0 l1.400 -0.900 l2 0.200" stroke="#fff" stroke-width="1.300" fill="none"/><path d="M638.2 222.5 l1.400 -0.900 l2 0.200" stroke="#fff" stroke-width="1.300" fill="none"/><path d="M635.2 231.5 l1.400 -0.900 l2 0.200" stroke="#fff" stroke-width="1.300" fill="none"/><path d="M638.2 245.0 l1.400 -0.900 l2 0.200" stroke="#fff" stroke-width="1.300" fill="none"/><path d="M620.2 237.5 l1.400 -0.900 l2 0.200" stroke="#fff" stroke-width="1.300" fill="none"/><path d="M618.7 246.5 l1.400 -0.900 l2 0.200" stroke="#fff" stroke-width="1.300" fill="none"/><path d="M612.7 254.0 l1.400 -0.900 l2 0.200" stroke="#fff" stroke-width="1.300" fill="none"/><path d="M605.2 233.0 l1.400 -0.900 l2 0.200" stroke="#fff" stroke-width="1.300" fill="none"/><path d="M596.2 231.5 l1.400 -0.900 l2 0.200" stroke="#fff" stroke-width="1.300" fill="none"/><path d="M584.2 236.0 l1.400 -0.900 l2 0.200" stroke="#fff" stroke-width="1.300" fill="none"/><path d="M581.2 245.0 l1.400 -0.900 l2 0.200" stroke="#fff" stroke-width="1.300" fill="none"/><path d="M566.2 227.0 l1.400 -0.900 l2 0.200" stroke="#fff" stroke-width="1.300" fill="none"/><path d="M554.2 233.0 l1.400 -0.900 l2 0.200" stroke="#fff" stroke-width="1.300" fill="none"/><path d="M542.2 221.0 l1.400 -0.900 l2 0.200" stroke="#fff" stroke-width="1.300" fill="none"/><path d="M536.2 230.0 l1.400 -0.900 l2 0.200" stroke="#fff" stroke-width="1.300" fill="none"/><path d="M512.2 231.5 l1.400 -0.900 l2 0.200" stroke="#fff" stroke-width="1.300" fill="none"/><path d="M512.2 246.5 l1.400 -0.900 l2 0.200" stroke="#fff" stroke-width="1.300" fill="none"/><path d="M530.2 246.5 l1.400 -0.900 l2 0.200" stroke="#fff" stroke-width="1.300" fill="none"/><path d="M563.2 252.5 l1.400 -0.900 l2 0.200" stroke="#fff" stroke-width="1.300" fill="none"/><path d="M561.7 270.5 l1.400 -0.900 l2 0.200" stroke="#fff" stroke-width="1.300" fill="none"/><path d="M561.7 281.0 l1.400 -0.900 l2 0.200" stroke="#fff" stroke-width="1.300" fill="none"/><path d="M578.2 258.5 l1.400 -0.900 l2 0.200" stroke="#fff" stroke-width="1.300" fill="none"/><path d="M578.2 276.5 l1.400 -0.900 l2 0.200" stroke="#fff" stroke-width="1.300" fill="none"/><path d="M578.2 284.0 l1.400 -0.900 l2 0.200" stroke="#fff" stroke-width="1.300" fill="none"/><path d="M611.2 281.0 l1.400 -0.900 l2 0.200" stroke="#fff" stroke-width="1.300" fill="none"/><path d="M596.2 252.5 l1.400 -0.900 l2 0.200" stroke="#fff" stroke-width="1.300" fill="none"/><path d="M513.7 272.0 l1.400 -0.900 l2 0.200" stroke="#fff" stroke-width="1.300" fill="none"/><path d="M512.2 287.0 l1.400 -0.900 l2 0.200" stroke="#fff" stroke-width="1.300" fill="none"/><path d="M524.2 270.5 l1.400 -0.900 l2 0.200" stroke="#fff" stroke-width="1.300" fill="none"/><path d="M504.7 203.0 l1.400 -0.900 l2 0.200" stroke="#fff" stroke-width="1.300" fill="none"/><path d="M510.7 207.5 l1.400 -0.900 l2 0.200" stroke="#fff" stroke-width="1.300" fill="none"/><path d="M518.2 210.5 l1.400 -0.900 l2 0.200" stroke="#fff" stroke-width="1.300" fill="none"/><path d="M503.2 215.0 l1.400 -0.900 l2 0.200" stroke="#fff" stroke-width="1.300" fill="none"/><path d="M509.8 218.9 l1.400 -0.900 l2 0.200" stroke="#fff" stroke-width="1.300" fill="none"/><path d="M517.6 221.0 l1.400 -0.900 l2 0.200" stroke="#fff" stroke-width="1.300" fill="none"/><path d="M524.2 215.0 l1.400 -0.900 l2 0.200" stroke="#fff" stroke-width="1.300" fill="none"/><path d="M524.2 222.5 l1.400 -0.900 l2 0.200" stroke="#fff" stroke-width="1.300" fill="none"/><path d="M539.2 237.5 l1.400 -0.900 l2 0.200" stroke="#fff" stroke-width="1.300" fill="none"/><path d="M560.2 220.1 l1.400 -0.900 l2 0.200" stroke="#fff" stroke-width="1.300" fill="none"/><path d="M591.7 238.1 l1.400 -0.900 l2 0.200" stroke="#fff" stroke-width="1.300" fill="none"/><rect x="532.0" y="208.5" width="2.8" height="2.300" fill="#fff"/><rect x="535.6" y="211.5" width="3.5" height="2.300" fill="#fff"/><rect x="539.5" y="209.4" width="2.8" height="2.300" fill="#fff"/><rect x="533.5" y="217.5" width="3.5" height="2.300" fill="#fff"/><rect x="532.0" y="213.6" width="2.1" height="2.300" fill="#fff"/><rect x="543.4" y="211.5" width="2.8" height="2.300" fill="#eee"/><rect x="547.0" y="214.5" width="2.1" height="2.300" fill="#ddd"/><rect x="569.5" y="211.5" width="2.8" height="2.300" fill="#a01414"/><rect x="573.4" y="214.5" width="2.8" height="2.300" fill="#b81c1c"/><rect x="578.8" y="217.5" width="3.5" height="2.300" fill="#a01414"/><rect x="581.8" y="221.4" width="2.8" height="2.300" fill="#b81c1c"/><rect x="575.5" y="219.6" width="2.1" height="2.300" fill="#e8dada"/><rect x="563.5" y="218.4" width="2.1" height="2.300" fill="#b81c1c"/><rect x="556.0" y="216.6" width="2.1" height="2.300" fill="#c22"/><rect x="503.8" y="199.8" width="2.8" height="2.300" fill="#c22"/><rect x="504.4" y="203.4" width="3.5" height="2.300" fill="#d33"/><rect x="583.6" y="216.6" width="2.1" height="2.300" fill="#c22"/><rect x="622.0" y="222.0" width="4.2" height="2.300" fill="#fff"/><rect x="598.0" y="237.6" width="2.8" height="2.300" fill="#fff"/><polyline points="503.5,196.5 530.5,205.5" stroke="#fff" stroke-width="1.800"/><polyline points="497.5,225.0 494.5,237.0" stroke="#2ec43a" stroke-width="1.500"/><polyline points="532.0,186.0 530.5,205.5 529.9,222.0" stroke="#fff" stroke-width="1.600" fill="none"/><polyline points="531.1,211.5 550.0,213.6 568.0,217.5 583.0,221.4" stroke="#fff" stroke-width="1.200" fill="none"/></svg>
<div style="left:458px;top:253px;width:94.5px;height:14.8px;background:#9b9b9b;"></div>
<span class="t" style="left:460px;top:256px;font-size:8px;line-height:9px;letter-spacing:-0.2px;color:#1d1d1d;">Specify next point or</span>
<div style="left:541.5px;top:257px;width:6px;height:7px;background:#d9d9d9;"></div>
<div style="left:543px;top:259px;width:1px;height:4px;background:#666;"></div>
<div style="left:545px;top:259px;width:1px;height:4px;background:#666;"></div>
<div style="left:312.5px;top:304.5px;width:33.5px;height:13.3px;background:#f4f4f4;"></div>
<div style="left:314px;top:305.8px;width:28.5px;height:10.8px;background:#2f74d6;"></div>
<span class="t" style="left:314.5px;top:307px;font-size:7.8px;line-height:9px;letter-spacing:-0.2px;color:#fff;">1950.76</span>
<div style="left:487px;top:318px;width:38px;height:13.3px;background:#a6a6a6;"></div>
<div style="left:947px;top:131.5px;width:6px;height:1.8px;background:#e8e8e8;"></div>
<svg style="left:958.5px;top:126px;" width="9" height="9" viewBox="0 0 9 9"><rect x="3" y="1" width="5" height="4.500" fill="none" stroke="#e8e8e8" stroke-width="1.200"/><rect x="1" y="3" width="5" height="4.500" fill="#000" stroke="#e8e8e8" stroke-width="1.200"/></svg>
<svg style="left:971.5px;top:126.5px;" width="8" height="8" viewBox="0 0 8 8"><path d="M1.200 1.200 L6.800 6.800 M6.800 1.200 L1.200 6.800" stroke="#f2f2f2" stroke-width="1.500"/></svg>
<div style="left:962px;top:137px;width:21px;height:153.5px;background:#3d3d3d;border-radius:2px;"></div>
<svg style="left:0px;top:0px;" width="1000" height="573" viewBox="0 0 1000 573"><g fill="none" stroke="#555" stroke-width="1"><circle cx="972.500" cy="154" r="6.500"/><path d="M966 170 h13 v10 a6.500 5 0 0 1 -13 0z"/><circle cx="972.500" cy="187" r="0.800"/><path d="M969 208 v-9 m2.500 9 v-11 m2.500 11 v-10 m2.500 10 v-8 M967.500 206 c0 8 10 8 10.500 0"/><path d="M967 221 l11 11 m0 -11 l-11 11"/><circle cx="972.500" cy="238" r="0.800"/><path d="M972.500 241 v12 m-6 -5 h12 l-6 -5 l-6 5"/><circle cx="972.500" cy="259" r="0.800"/><rect x="966.500" y="268" width="12" height="12"/><rect x="970.500" y="272" width="4" height="4" fill="#555"/></g></svg>
<div style="left:985px;top:119px;width:15px;height:341px;background:#f0f0f0;"></div>
<div style="left:984.8px;top:119px;width:0.8px;height:341px;background:#cfcfcf;"></div>
<svg style="left:987px;top:122.5px;" width="8" height="7" viewBox="0 0 8 7"><path d="M1.200 5 L4 2 L6.800 5" fill="none" stroke="#555" stroke-width="1.100"/></svg>
<div style="left:986px;top:396px;width:10px;height:9.5px;background:#c4c4c4;"></div>
<div style="left:148px;top:505px;width:696px;height:11.5px;background:#c6c6c6;"></div>
<div style="left:148px;top:505px;width:696px;height:0.8px;background:#e0e0e0;"></div>
<svg style="left:150.5px;top:506.5px;" width="6" height="8" viewBox="0 0 6 8"><path d="M4.300 1 L1.500 4 L4.300 7" fill="none" stroke="#333" stroke-width="1.200"/></svg>
<div style="left:555px;top:506px;width:11px;height:4px;background:#b0b0b0;"></div>
<div style="left:360.5px;top:473.2px;width:25.5px;height:9.6px;background:#404040;"></div>
<span class="t" style="left:361.5px;top:474px;font-size:7.9px;line-height:9px;letter-spacing:0px;color:#aeaeae;font-family:&quot;Liberation Mono&quot;,monospace;">PLINE</span>
<div style="left:360.5px;top:485.7px;width:96.5px;height:9.6px;background:#404040;"></div>
<span class="t" style="left:361.5px;top:486px;font-size:7.9px;line-height:9px;letter-spacing:0px;color:#aeaeae;font-family:&quot;Liberation Mono&quot;,monospace;">Specify start point:</span>
<div style="left:360.5px;top:498.2px;width:125px;height:9.6px;background:#404040;"></div>
<span class="t" style="left:361.5px;top:499px;font-size:7.9px;line-height:9px;letter-spacing:0px;color:#aeaeae;font-family:&quot;Liberation Mono&quot;,monospace;">Current line-width is 0.00</span>
<div style="left:0px;top:516.5px;width:844px;height:30px;background:#222935;"></div>
<div style="left:0px;top:516.5px;width:36px;height:11px;background:#2f3746;"></div>
<span class="t" style="left:8px;top:518px;font-size:8.2px;line-height:9px;letter-spacing:-0.2px;color:#f1f3f6;font-weight:bold;">Model</span>
<span class="t" style="left:46px;top:518px;font-size:8.2px;line-height:9px;letter-spacing:-0.2px;color:#8d95a3;">Layout1</span>
<span class="t" style="left:91.5px;top:517px;font-size:9px;line-height:10px;letter-spacing:0px;color:#8d95a3;transform:translateX(-50%);">+</span>
<div style="left:320.5px;top:510.5px;width:37px;height:17px;background:#2b3340;border-radius:2px 0 0 2px;"></div>
<div style="left:323px;top:512.0px;width:0.9px;height:0.9px;background:#aab0bb;"></div>
<div style="left:325px;top:512.0px;width:0.9px;height:0.9px;background:#aab0bb;"></div>
<div style="left:323px;top:514.5px;width:0.9px;height:0.9px;background:#aab0bb;"></div>
<div style="left:325px;top:514.5px;width:0.9px;height:0.9px;background:#aab0bb;"></div>
<div style="left:323px;top:517.0px;width:0.9px;height:0.9px;background:#aab0bb;"></div>
<div style="left:325px;top:517.0px;width:0.9px;height:0.9px;background:#aab0bb;"></div>
<div style="left:323px;top:519.5px;width:0.9px;height:0.9px;background:#aab0bb;"></div>
<div style="left:325px;top:519.5px;width:0.9px;height:0.9px;background:#aab0bb;"></div>
<div style="left:323px;top:522.0px;width:0.9px;height:0.9px;background:#aab0bb;"></div>
<div style="left:325px;top:522.0px;width:0.9px;height:0.9px;background:#aab0bb;"></div>
<div style="left:323px;top:524.5px;width:0.9px;height:0.9px;background:#aab0bb;"></div>
<div style="left:325px;top:524.5px;width:0.9px;height:0.9px;background:#aab0bb;"></div>
<svg style="left:330px;top:515.5px;" width="7" height="7" viewBox="0 0 7 7"><path d="M1.200 1.200 L5.800 5.800 M5.800 1.200 L1.200 5.800" stroke="#cfd4dc" stroke-width="1.100"/></svg>
<svg style="left:341px;top:514px;" width="10" height="10" viewBox="0 0 10 10"><path d="M2 8.500 L6 4.500 M5.500 1 A2.500 2.500 0 1 0 8.800 4.300 L7 4.800 L5.500 3.200Z" stroke="#cfd4dc" stroke-width="1.300" fill="#cfd4dc"/></svg>
<div style="left:357px;top:512px;width:467px;height:15.5px;background:#c2c2c2;"></div>
<div style="left:357px;top:512px;width:467px;height:1px;background:#a8a8a8;"></div>
<span class="t" style="left:364px;top:517px;font-size:7px;line-height:7px;letter-spacing:0px;color:#555;">▸</span>
<span class="t" style="left:380px;top:517px;font-size:7.75px;line-height:8px;letter-spacing:0px;color:#1a1a1a;font-weight:bold;font-family:&quot;Liberation Mono&quot;,monospace;">PLINE Specify next point or [</span>
<div style="left:513.85px;top:515.5px;width:15.950000000000001px;height:9.5px;background:#aeb3cf;border-radius:1.5px;"></div>
<span class="t" style="left:514.85px;top:517px;font-size:7.75px;line-height:8px;letter-spacing:0px;color:#1a1a1a;font-weight:bold;font-family:&quot;Liberation Mono&quot;,monospace;">Arc</span>
<div style="left:532.45px;top:515.5px;width:43.85px;height:9.5px;background:#aeb3cf;border-radius:1.5px;"></div>
<span class="t" style="left:533.45px;top:517px;font-size:7.75px;line-height:8px;letter-spacing:0px;color:#1a1a1a;font-weight:bold;font-family:&quot;Liberation Mono&quot;,monospace;">Halfwidth</span>
<div style="left:578.95px;top:515.5px;width:29.900000000000002px;height:9.5px;background:#aeb3cf;border-radius:1.5px;"></div>
<span class="t" style="left:579.95px;top:517px;font-size:7.75px;line-height:8px;letter-spacing:0px;color:#1a1a1a;font-weight:bold;font-family:&quot;Liberation Mono&quot;,monospace;">Length</span>
<div style="left:611.5px;top:515.5px;width:20.6px;height:9.5px;background:#aeb3cf;border-radius:1.5px;"></div>
<span class="t" style="left:612.5px;top:517px;font-size:7.75px;line-height:8px;letter-spacing:0px;color:#1a1a1a;font-weight:bold;font-family:&quot;Liberation Mono&quot;,monospace;">Undo</span>
<div style="left:634.75px;top:515.5px;width:25.25px;height:9.5px;background:#aeb3cf;border-radius:1.5px;"></div>
<span class="t" style="left:635.75px;top:517px;font-size:7.75px;line-height:8px;letter-spacing:0px;color:#1a1a1a;font-weight:bold;font-family:&quot;Liberation Mono&quot;,monospace;">Width</span>
<span class="t" style="left:659.0px;top:517px;font-size:7.75px;line-height:8px;letter-spacing:0px;color:#1a1a1a;font-weight:bold;font-family:&quot;Liberation Mono&quot;,monospace;">]:</span>
<div style="left:604px;top:528.5px;width:36px;height:17.5px;background:#2a313e;"></div>
<span class="t" style="left:608px;top:535px;font-size:8.2px;line-height:9px;letter-spacing:-0.3px;color:#cdd2da;">MODEL</span>
<svg style="left:0px;top:0px;" width="1000" height="573" viewBox="0 0 1000 573"><g stroke="#c3c8d0" stroke-width="0.700" fill="none"><path d="M641.5 533 v10.500 M640.500 534.0 h10.500"/><path d="M644.3 533 v10.500 M640.500 536.8 h10.500"/><path d="M647.1 533 v10.500 M640.500 539.6 h10.500"/><path d="M649.9 533 v10.500 M640.500 542.4 h10.500"/></g><g fill="#c3c8d0"><rect x="657.5" y="534.0" width="1.300" height="1.300"/><rect x="657.5" y="537.5" width="1.300" height="1.300"/><rect x="657.5" y="541.0" width="1.300" height="1.300"/><rect x="661.0" y="534.0" width="1.300" height="1.300"/><rect x="661.0" y="537.5" width="1.300" height="1.300"/><rect x="661.0" y="541.0" width="1.300" height="1.300"/><rect x="664.5" y="534.0" width="1.300" height="1.300"/><rect x="664.5" y="537.5" width="1.300" height="1.300"/><rect x="664.5" y="541.0" width="1.300" height="1.300"/></g><path d="M686 533 V543.500 H694.500" stroke="#9aa2b0" stroke-width="1" fill="none"/><circle cx="704.500" cy="538.500" r="4.300" stroke="#9aa2b0" stroke-width="1" fill="none"/><path d="M704.500 538.500 L708.500 534.500" stroke="#9aa2b0" stroke-width="1"/><path d="M736.500 533 v10" stroke="#7f8897" stroke-width="1"/></svg>
<div style="left:673.4px;top:537.45px;width:0;height:0;border-left:2.1px solid transparent;border-right:2.1px solid transparent;border-top:2.1px solid #c9ced7;"></div>
<div style="left:716.4px;top:537.45px;width:0;height:0;border-left:2.1px solid transparent;border-right:2.1px solid transparent;border-top:2.1px solid #c9ced7;"></div>
<div style="left:681.3px;top:530px;width:0.9px;height:15px;background:#3a4252;"></div>
<div style="left:731px;top:530px;width:0.9px;height:15px;background:#3a4252;"></div>
<div style="left:766.5px;top:530.5px;width:15px;height:15.5px;background:#3b6ea8;"></div>
<div style="left:769px;top:533.5px;width:10px;height:9.5px;background:#3b6ea8;box-shadow:inset 0 0 0 1px #8fb9e6;"></div>
<div style="left:784.5px;top:537.5px;width:0;height:0;border-left:2.0px solid transparent;border-right:2.0px solid transparent;border-top:2.0px solid #9aa2b0;"></div>
<div style="left:793px;top:530.5px;width:15.5px;height:15.5px;background:#3b6ea8;"></div>
<svg style="left:812px;top:532px;" width="10" height="12" viewBox="0 0 10 12"><path d="M5 1 V7 M5 7 L1.500 10.500 M5 7 L8.500 10.500" stroke="#8fa6c6" stroke-width="1.500" fill="none"/></svg>
<svg style="left:827px;top:532px;" width="10" height="12" viewBox="0 0 10 12"><path d="M5 1 V7 M5 7 L1.500 10.500 M5 7 L8.500 10.500" stroke="#8fa6c6" stroke-width="1.500" fill="none"/></svg>
<div style="left:0px;top:546.5px;width:1000px;height:27px;background:#959595;"></div>
<div style="left:3px;top:554px;width:5.2px;height:5.2px;background:#0c0c0c;"></div>
<div style="left:3px;top:560px;width:5.2px;height:5.2px;background:#0c0c0c;"></div>
<div style="left:9px;top:554px;width:5.2px;height:5.2px;background:#0c0c0c;"></div>
<div style="left:9px;top:560px;width:5.2px;height:5.2px;background:#0c0c0c;"></div>
<svg style="left:32px;top:552px;" width="16" height="16" viewBox="0 0 16 16"><circle cx="9.500" cy="6.500" r="4.600" fill="none" stroke="#0c0c0c" stroke-width="1.700"/><path d="M6.300 10 L1.800 14.500" stroke="#0c0c0c" stroke-width="2"/></svg>
<svg style="left:64px;top:551px;" width="20" height="18" viewBox="0 0 20 18"><path d="M3 3 L11 9 L16 5Z" fill="#c9c2bd" stroke="#9a7f78" stroke-width="0.600"/><circle cx="8" cy="14" r="2.200" fill="none" stroke="#3f6f9e" stroke-width="1.300"/><circle cx="13" cy="14" r="2.200" fill="none" stroke="#3f6f9e" stroke-width="1.300"/><path d="M8.500 12 L12 6 M12.500 12 L9.500 7" stroke="#4a7fb0" stroke-width="1.200"/></svg>
<svg style="left:97px;top:551px;" width="17" height="17" viewBox="0 0 17 17"><path d="M3 5 L11 2 L15 13 L6 15Z" fill="#5d97b5"/><path d="M3 5 L11 2 L12 4 L4 7Z" fill="#b9a76a"/></svg>
<div style="left:129.500px;top:552px;width:16.500px;height:16px;border-radius:50%;background:conic-gradient(from 200deg,#1f7bbf,#2aa19a 40%,#35b56a 55%,#1f6fb5 80%,#1f7bbf);"></div>
<div style="left:134px;top:557px;width:7px;height:5px;background:#8e9a9e;border-radius:50%;"></div>
<svg style="left:161px;top:551px;" width="18" height="18" viewBox="0 0 18 18"><path d="M4 15 L11 3 L13 4 L8 16Z" fill="#a9a9a0"/><path d="M8 13 L14 5" stroke="#8a8f7c" stroke-width="2"/></svg>
<div style="left:196px;top:555px;width:14.5px;height:10.5px;background:#d9b545;border-radius:1px;"></div>
<div style="left:196px;top:553.5px;width:6px;height:2.5px;background:#c9a43a;"></div>
<div style="left:199px;top:560px;width:8.5px;height:5.5px;background:#3f8fb0;"></div>
<div style="left:226.500px;top:552.500px;width:15.500px;height:15.500px;border-radius:50%;background:radial-gradient(circle at 45% 50%,#6a3fa0 0 28%,#d9482f 45%,#e8862f 80%);"></div>
<div style="left:260px;top:551.500px;width:16.500px;height:16.500px;border-radius:50%;background:#c8d0d8;box-shadow:inset 0 0 0 1.500px #2f6fb5;"></div>
<span class="t" style="left:268.5px;top:556px;font-size:5px;line-height:6px;letter-spacing:0px;color:#2f6fb5;transform:translateX(-50%);">Zalo</span>
<div style="left:292.500px;top:552px;width:16.500px;height:16.500px;border-radius:50%;background:conic-gradient(from 60deg,#c9a52f 0 33%,#3f8f4f 33% 66%,#c0453a 66%);"></div>
<div style="left:300.5px;top:560.5px;width:8.5px;height:8px;background:#1d1d1d;border-radius:50%;"></div>
<span class="t" style="left:304.8px;top:561px;font-size:6.5px;line-height:7px;letter-spacing:0px;color:#d8b53a;transform:translateX(-50%);font-weight:bold;">9</span>
<div style="left:325px;top:552.500px;width:15px;height:15px;border-radius:50%;background:#b85a3a;"></div>
<div style="left:323.5px;top:556px;width:8px;height:8px;background:#c9683f;border-radius:1px;"></div>
<span class="t" style="left:327.5px;top:556px;font-size:6.5px;line-height:7px;letter-spacing:0px;color:#e8c9b8;transform:translateX(-50%);font-weight:bold;">P</span>
<span class="t" style="left:365.5px;top:551px;font-size:16px;line-height:17px;letter-spacing:0px;color:#a5252a;transform:translateX(-50%);font-weight:bold;">A</span>
<div style="left:389.5px;top:552px;width:15.5px;height:15.5px;background:#3f8f2f;border-radius:2px;"></div>
<span class="t" style="left:397.3px;top:553px;font-size:12px;line-height:14px;letter-spacing:0px;color:#a8d08a;transform:translateX(-50%);font-weight:bold;">C</span>
<div style="left:422px;top:552px;width:15.5px;height:15.5px;background:#b5603a;border-radius:2px;"></div>
<span class="t" style="left:429.8px;top:553px;font-size:12px;line-height:14px;letter-spacing:0px;color:#d8a58a;transform:translateX(-50%);font-weight:bold;">C</span>
<div style="left:92px;top:570.8px;width:22px;height:2.5px;background:#1f4f7f;"></div>
<div style="left:124px;top:570.8px;width:26px;height:2.5px;background:#1f4f7f;"></div>
<div style="left:195px;top:570.8px;width:20px;height:2.5px;background:#1f4f7f;"></div>
<div style="left:255px;top:570.8px;width:29px;height:2.5px;background:#1f4f7f;"></div>
<div style="left:288px;top:570.8px;width:25px;height:2.5px;background:#1f4f7f;"></div>
<div style="left:320px;top:570.8px;width:25px;height:2.5px;background:#1f4f7f;"></div>
<div style="left:351px;top:570.8px;width:29px;height:2.5px;background:#1f4f7f;"></div>
<div style="left:385px;top:570.8px;width:27px;height:2.5px;background:#1f4f7f;"></div>
<div style="left:417px;top:570.8px;width:25px;height:2.5px;background:#1f4f7f;"></div>
<svg style="left:0px;top:0px;" width="1000" height="573" viewBox="0 0 1000 573"><defs><linearGradient id="wl" x1="0" x2="0" y1="0" y2="1"><stop offset="0" stop-color="#cbcbcb"/><stop offset="0.450" stop-color="#bdbdbd"/><stop offset="1" stop-color="#a2a2a2"/></linearGradient><linearGradient id="wl2" x1="0" x2="0" y1="0" y2="1"><stop offset="0" stop-color="#b2b2b2"/><stop offset="0.500" stop-color="#9c9c9c"/><stop offset="1" stop-color="#7c7c7c"/></linearGradient><linearGradient id="bl" x1="0" x2="1"><stop offset="0" stop-color="#b39a8d"/><stop offset="0.200" stop-color="#d8cbc2"/><stop offset="0.400" stop-color="#a89084"/><stop offset="0.600" stop-color="#d2c3b9"/><stop offset="0.800" stop-color="#a68e83"/><stop offset="1" stop-color="#c5b5ab"/></linearGradient><filter id="wb" x="-5%" y="-5%" width="110%" height="110%"><feGaussianBlur stdDeviation="0.750"/></filter><clipPath id="wc"><rect x="844" y="458.700" width="156" height="115"/></clipPath></defs><g clip-path="url(#wc)"><g filter="url(#wb)"><rect x="840" y="455" width="164" height="122" fill="url(#wl)"/><rect x="840" y="455" width="31" height="122" fill="url(#wl2)"/><rect x="857" y="455" width="14" height="122" fill="#b4b4b4" opacity="0.550"/><path d="M844 478 L862 492 V498.500 L844 485Z" fill="#5c5350"/><path d="M844 486 L861 498.500 V503 L844 491Z" fill="#c2c2c2"/><path d="M845 500 L859 510 M845 511 L858 520 M845 523 L857 531 M845 535 L856 542" stroke="#d0d0d0" stroke-width="1.800"/><path d="M845 505 L859 515 M845 517 L858 526 M845 529 L857 537" stroke="#5a5f68" stroke-width="1.600"/><rect x="843" y="521" width="8" height="30" fill="#3f526c" opacity="0.550"/><rect x="914" y="455" width="22" height="44.500" fill="url(#bl)"/><rect x="936" y="455" width="68" height="36" fill="#c4c4c4"/><rect x="938" y="472.500" width="62" height="2" fill="#dcdcdc"/><rect x="938" y="474.500" width="62" height="14" fill="#b8b8b8"/><rect x="946" y="460.500" width="50" height="1.300" fill="#777"/><path d="M955 461 L961 459 L972 461 L971 470 L966 476 L959 474Z" fill="#6e6e70"/><path d="M960 462 L968 472 M968 461 L959 472" stroke="#4a4a4c" stroke-width="2"/><rect x="958.500" y="474" width="4.500" height="9" fill="#4e4e50"/><rect x="990" y="460" width="5" height="6" fill="#555"/><rect x="938.500" y="488.500" width="51.500" height="86" fill="#8e8e8e"/><rect x="941" y="491.500" width="47" height="83" fill="#2b2d2c"/><path d="M957 491.500 V574 M972 491.500 V574 M941 503 H988 M941 515 H988 M941 527 H988 M941 539 H988 M941 551 H988" stroke="#414442" stroke-width="1.400"/><ellipse cx="976" cy="496.500" rx="2.500" ry="1.500" fill="#b9c3cc"/><path d="M976 506 q3 6 0.500 12 q2.500 7 1 12" stroke="#a3261c" stroke-width="3.600" fill="none"/><circle cx="978.500" cy="531" r="2.300" fill="#b08a2c"/><rect x="988" y="491" width="12" height="60" fill="#b0b0b0"/><ellipse cx="987" cy="553" rx="7" ry="5.500" fill="#ad5f1c"/><ellipse cx="981" cy="546" rx="4.500" ry="4" fill="#8a968a"/><rect x="970" y="557" width="26" height="16" fill="#37514f"/><rect x="973" y="559" width="5" height="11" fill="#8795a5"/><rect x="982" y="560" width="4" height="10" fill="#4a7a6a"/><path d="M893 545 L907 543.500 L910 556 L896 556Z" fill="#1f1f1f"/><path d="M866 578 C869 560 880 556 902 551.500 L940 551.500 C958 556 964 562 967 578Z" fill="#7a7672"/><path d="M912 540 H933 V554 C926 559 918 559 912 554Z" fill="#8f7464"/><path d="M905.500 521 C905.500 506 913 502 922.500 502 C932 502 939.500 506 939.500 521 C939.500 536 931 546.500 922.500 546.500 C914 546.500 905.500 536 905.500 521Z" fill="#a08676"/><path d="M903.500 521 C901 504 910 497.500 922 497.500 C936 497.500 943.500 504 941 521 C939.500 514 935 510.500 922 511.500 C911 511 906 514 903.500 521Z" fill="#1c1918"/><path d="M908.500 522 h11.500 v5 h-11.500z M924.500 522 h11.500 v5 h-11.500z M920 524 h4.500" fill="none" stroke="#6a5347" stroke-width="0.900"/><path d="M917.500 539.500 q5 1.800 10 0" stroke="#7a5247" stroke-width="1.300" fill="none"/><path d="M922 527 v6.500" stroke="#8a6a5b" stroke-width="1.800"/><ellipse cx="913" cy="524.500" rx="2" ry="1" fill="#3a2e2a"/><ellipse cx="930.500" cy="524.500" rx="2" ry="1" fill="#3a2e2a"/><path d="M860 557 L876 554.500 L884 558 L872 578 H860Z" fill="#262626"/><rect x="843" y="552" width="18" height="26" fill="#6d6d6d"/></g></g></svg>
</div>
<div id="o">
<div style="left:0;top:500px;width:1000px;height:73px;background:linear-gradient(rgba(0,0,0,0),rgba(0,0,0,0.120) 55%,rgba(0,0,0,0.420));"></div>
<div style="left:6px;top:517.5px;width:976.5px;height:3.6px;background:rgba(255,255,255,0.550);"></div>
<div style="left:6px;top:517.5px;width:779px;height:3.6px;background:linear-gradient(90deg,#f5103a 0%,#f5103a 78%,#f4267c 100%);"></div>
<div style="left:777.3px;top:512px;width:14.6px;height:14.6px;background:#ff0a33;border-radius:50%;"></div>
<svg style="left:0px;top:0px;" width="1000" height="573" viewBox="0 0 1000 573"><rect x="24.500" y="538" width="3.600" height="18.500" fill="#fff"/><path d="M42.500 538.500 V556 L29 547.300Z" fill="#fff"/><path d="M77 538 L91.500 547.300 L77 556.500Z" fill="#fff"/><path d="M122.500 538.500 V556 L136 547.300Z" fill="#fff"/><rect x="137" y="538" width="3.600" height="18.500" fill="#fff"/><path d="M172 543.500 H177 L184 538 V556.500 L177 551 H172Z" fill="#fff"/><path d="M186 542.300 A5.500 5.500 0 0 1 186 552.300Z" fill="#fff"/><path d="M186 538.600 A8.700 8.700 0 0 1 186 556" stroke="#fff" stroke-width="2" fill="none"/><rect x="737" y="538" width="24" height="18" rx="3" fill="#fff"/><g transform="translate(787.32,533.92) scale(1.140)"><path d="M19.14,12.94c0.04-0.3,0.06-0.61,0.06-0.94c0-0.32-0.02-0.64-0.07-0.94l2.030-1.580c0.180-0.140,0.230-0.410,0.120-0.610l-1.920-3.320c-0.120-0.220-0.370-0.290-0.590-0.220l-2.390,0.960c-0.500-0.380-1.030-0.700-1.620-0.940L14.400,2.810c-0.040-0.240-0.240-0.410-0.480-0.410h-3.840c-0.240,0-0.430,0.170-0.470,0.410L9.250,5.350C8.660,5.590,8.120,5.920,7.630,6.290L5.240,5.330c-0.220-0.080-0.470,0-0.590,0.220L2.740,8.870C2.620,9.080,2.660,9.340,2.860,9.480l2.030,1.580C4.840,11.360,4.800,11.690,4.800,12s0.020,0.640,0.070,0.940l-2.030,1.580c-0.180,0.140-0.230,0.410-0.120,0.610l1.920,3.320c0.120,0.220,0.370,0.290,0.590,0.220l2.390-0.960c0.500,0.380,1.030,0.700,1.620,0.940l0.360,2.540c0.050,0.240,0.240,0.410,0.480,0.410h3.840c0.240,0,0.440-0.170,0.470-0.410l0.360-2.540c0.590-0.240,1.130-0.560,1.620-0.940l2.390,0.960c0.220,0.080,0.470,0,0.590-0.220l1.920-3.320c0.120-0.220,0.070-0.470-0.120-0.610L19.140,12.940zM12,15.600c-1.980,0-3.600-1.620-3.600-3.600s1.620-3.600,3.600-3.600s3.600,1.620,3.600,3.600S13.980,15.600,12,15.600z" fill="#fff" fill-rule="evenodd"/></g><rect x="841" y="537.800" width="24.500" height="18.500" rx="2" fill="none" stroke="#fff" stroke-width="2.200"/><rect x="851.500" y="545" width="10.500" height="7.800" fill="#fff"/><rect x="892" y="538.600" width="24.800" height="16.800" rx="1" fill="none" stroke="#fff" stroke-width="2.200"/><path d="M947 544.500 V538 H953.500 M960 538 H966 V544.500 M966 550.500 V557 H960 M953.500 557 H947 V550.500" fill="none" stroke="#fff" stroke-width="2.600"/></svg>
<span class="t" style="left:742px;top:539px;font-size:13px;line-height:15px;letter-spacing:0.6px;color:#222;font-weight:bold;transform:scaleX(1.100);transform-origin:0 50%;">cc</span>
<span class="t" style="left:214.5px;top:539px;font-size:14.2px;line-height:16px;letter-spacing:0px;color:#f4f4f4;-webkit-text-stroke:0;">1:20 / 1:40</span>
<div style="left:461.5px;top:29px;width:65px;height:31px;background:rgba(62,60,57,0.960);border-radius:8px;"></div>
<svg style="left:0px;top:0px;" width="1000" height="573" viewBox="0 0 1000 573"><path d="M469.500 38.500 L474.500 43.500 M474.800 39.300 V43.800 H470.300" stroke="#fff" stroke-width="1.500" fill="none"/><path d="M477.500 37.300 H484.300 V45.500 M469 46.500 V52 H474.500" stroke="#fff" stroke-width="1.500" fill="none"/><rect x="476.500" y="46.500" width="9.600" height="6.200" rx="1.400" fill="#fff"/><path d="M510 37.500 H505.300 Q503.600 37.500 503.600 39.200 V52 Q503.600 53.700 505.300 53.700 H514.200 Q515.900 53.700 515.900 52 V46.500" stroke="#fff" stroke-width="1.500" fill="none"/><path d="M506.500 41.700 H511 M506.500 45.700 H512.800 M506.500 49 H512.800" stroke="#fff" stroke-width="1.400"/><path d="M514.500 33.800 L515.700 36.800 L518.700 38 L515.700 39.200 L514.500 42.200 L513.300 39.200 L510.300 38 L513.300 36.800Z" fill="#fff"/><path d="M517.700 41 L518.500 42.900 L520.400 43.700 L518.500 44.500 L517.700 46.400 L516.900 44.500 L515 43.700 L516.900 42.900Z" fill="#fff"/></svg>
<div style="left:953px;top:24px;width:22px;height:22px;background:#ececee;border-radius:50%;"></div>
<div style="left:962.7px;top:34px;width:2.8px;height:8.3px;background:#2a2a2a;"></div>
<div style="left:962.4px;top:29.3px;width:3.4px;height:3.2px;background:#2a2a2a;border-radius:50%;"></div>
</div>
</div>
</body></html>
